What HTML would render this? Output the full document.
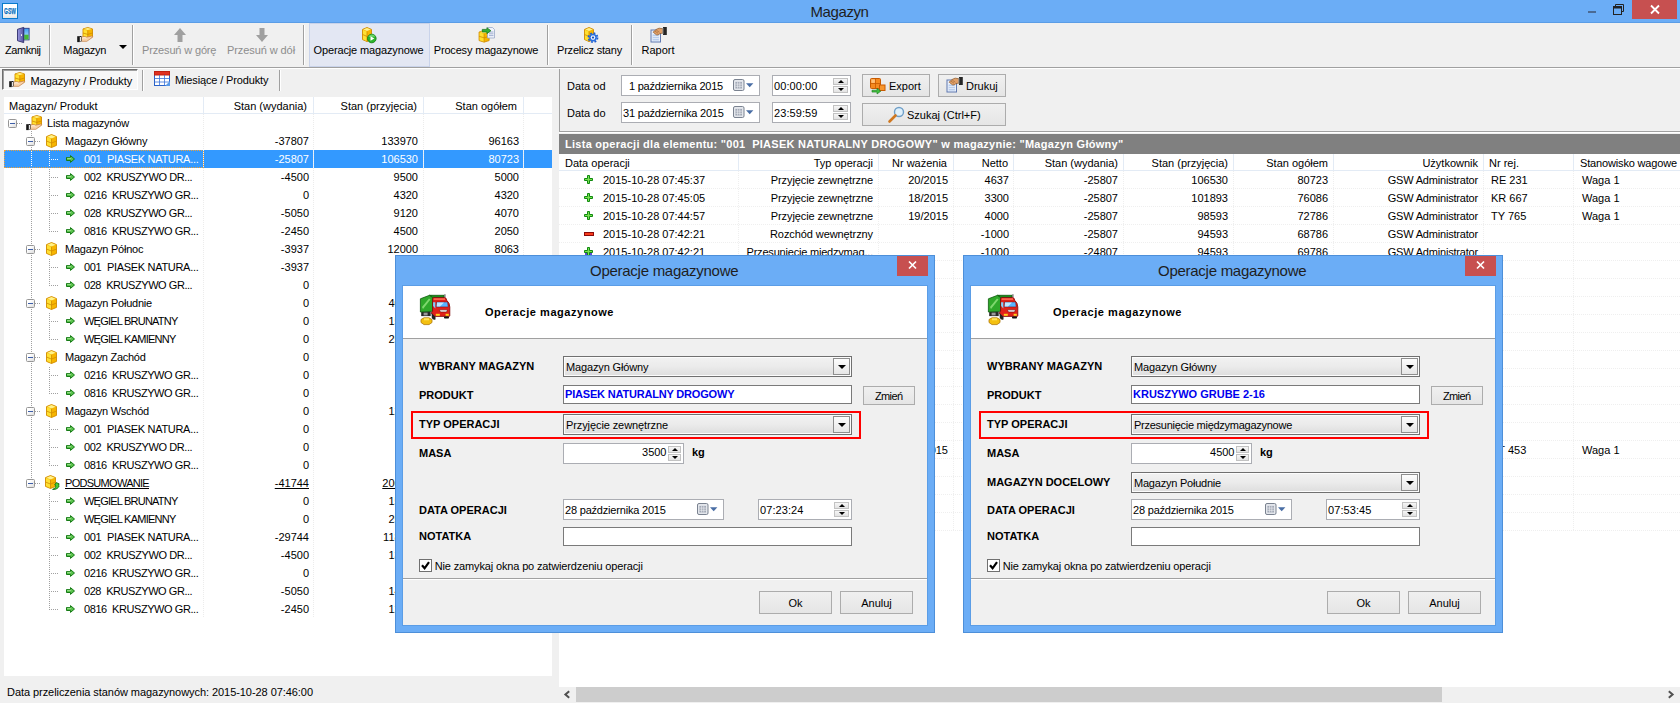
<!DOCTYPE html><html lang="pl"><head><meta charset="utf-8"><title>Magazyn</title><style>
*{box-sizing:border-box}
html,body{margin:0;padding:0}
body{width:1680px;height:703px;position:relative;overflow:hidden;background:#f0f0f0;font:11px "Liberation Sans",sans-serif;color:#000}
.a{position:absolute;white-space:pre}
.t{position:absolute;white-space:pre;line-height:14px;height:14px}
.r{text-align:right}
.b{font-weight:bold}
.w{color:#fff}
.g{color:#8d8d8d}
.vs{position:absolute;width:2px;border-left:1px solid #a0a0a0;border-right:1px solid #fff}
.btn{position:absolute;border:1px solid #acacac;background:linear-gradient(#f0f0f0,#e5e5e5);}
.inp{position:absolute;border:1px solid #abadb3;background:#fff}
.cmb{position:absolute;border:1px solid #707070;box-shadow:inset 0 0 0 1px #fcfcfc;background:linear-gradient(#f2f2f2,#ebebeb 50%,#dddddd);}
.dlg{position:absolute;background:#6badf6;border:1px solid #4d8fd9;box-shadow:0 0 0 0 #000}
svg{position:absolute;overflow:visible}
</style></head><body>
<div class="a" style="left:0px;top:0px;width:1680px;height:23px;background:#6badf6;border-bottom:1px solid #5b9de6"></div>
<div class="a" style="left:2px;top:3px;width:16px;height:16px;background:linear-gradient(#fff 55%,#e4e4e4);border:1px solid #0a7acc"></div>
<svg style="left:2px;top:3px" width="16" height="16" viewBox="0 0 16 16"><text x="2.100" y="11.100" font-family="Liberation Sans, sans-serif" font-size="8.500" font-weight="bold" fill="#0a6fc0" stroke="#0a6fc0" stroke-width=".25" textLength="11.800" lengthAdjust="spacingAndGlyphs">GSW</text></svg>
<div class="t " style="left:689.5px;width:300px;text-align:center;top:5px;letter-spacing:-0.411px;font-size:15px;line-height:18px;height:18px;top:3px;color:#1e1e1e">Magazyn</div>
<div class="a" style="left:1588px;top:11px;width:8px;height:2px;background:#4a6a94"></div>
<svg style="left:1613px;top:4px" width="11" height="11" viewBox="0 0 11 11"><path d="M2.5 2.5V.5h8v7h-2" fill="none" stroke="#222" stroke-width="1"/><rect x=".5" y="2.5" width="8" height="8" fill="none" stroke="#222"/><rect x="1" y="3" width="7" height="1.5" fill="#222"/></svg>
<div class="a" style="left:1632px;top:0px;width:45px;height:19px;background:#c75050"></div>
<svg style="left:1650px;top:5px" width="10" height="9" viewBox="0 0 10 9"><path d="M1 .5l8 8M9 .5l-8 8" stroke="#fff" stroke-width="1.8"/></svg>
<div class="a" style="left:0px;top:67px;width:1680px;height:1px;background:#a0a0a0"></div>
<div class="a" style="left:0px;top:68px;width:1680px;height:1px;background:#fff"></div>
<div class="a" style="left:49px;top:25px;width:2px;height:40px;border-left:1px solid #a0a0a0;border-right:1px solid #fff"></div>
<div class="a" style="left:132px;top:25px;width:2px;height:40px;border-left:1px solid #a0a0a0;border-right:1px solid #fff"></div>
<div class="a" style="left:303px;top:25px;width:2px;height:40px;border-left:1px solid #a0a0a0;border-right:1px solid #fff"></div>
<div class="a" style="left:547px;top:25px;width:2px;height:40px;border-left:1px solid #a0a0a0;border-right:1px solid #fff"></div>
<div class="a" style="left:631px;top:25px;width:2px;height:40px;border-left:1px solid #a0a0a0;border-right:1px solid #fff"></div>
<div class="a" style="left:309px;top:23px;width:121px;height:44px;background:#e3e7f3;border:1px solid #c9d3ea"></div>
<div class="t " style="left:-127.25px;width:300px;text-align:center;top:43px;letter-spacing:-0.431px;">Zamknij</div>
<div class="t " style="left:-65.25px;width:300px;text-align:center;top:43px;letter-spacing:-0.234px;">Magazyn</div>
<svg style="left:119px;top:45px" width="8" height="4" viewBox="0 0 8 4"><path d="M0 0h8L4 4z" fill="#000"/></svg>
<div class="t g" style="left:29.19999999999999px;width:300px;text-align:center;top:43px;letter-spacing:-0.153px;">Przesuń w górę</div>
<div class="t g" style="left:111px;width:300px;text-align:center;top:43px;letter-spacing:-0.084px;">Przesuń w dół</div>
<div class="t " style="left:218.5px;width:300px;text-align:center;top:43px;letter-spacing:-0.132px;">Operacje magazynowe</div>
<div class="t " style="left:336px;width:300px;text-align:center;top:43px;letter-spacing:-0.173px;">Procesy magazynowe</div>
<div class="t " style="left:439.5px;width:300px;text-align:center;top:43px;letter-spacing:-0.204px;">Przelicz stany</div>
<div class="t " style="left:508px;width:300px;text-align:center;top:43px;">Raport</div>
<svg style="left:17px;top:27px" width="13" height="16" viewBox="0 0 13 16"><defs><linearGradient id="sky" x1="0" y1="0" x2="0" y2="1"><stop offset="0" stop-color="#3a9af0"/><stop offset="1" stop-color="#d0ecff"/></linearGradient><linearGradient id="dr" x1="0" y1="0" x2="1" y2="0"><stop offset="0" stop-color="#9a98e0"/><stop offset="1" stop-color="#55529f"/></linearGradient></defs><rect x="6.700" y="1.300" width="5.400" height="11.600" fill="url(#sky)" stroke="#2a3a8a" stroke-width=".9"/><rect x="7.200" y="7.700" width="4.400" height="4.800" fill="#46b836"/><path d="M.5 2.300L6.700 .4v15.200L.5 13.700z" fill="url(#dr)" stroke="#2e2c6a" stroke-width=".9" stroke-linejoin="round"/><rect x="4" y="7.300" width="1" height="1.600" fill="#fff"/></svg>
<svg style="left:77px;top:27px" width="17" height="16" viewBox="0 0 17 16"><path d="M6.0 1.92L10.75 0.5l4.75 1.42v8.16l-4.75 1.42-4.75-1.42z" fill="#f7b500" stroke="#d08c00" stroke-width=".9"/><path d="M6.5 2.42l4.25 1.22v7.5600000000000005L6.5 9.68z" fill="#ffe032"/><path d="M6.8 1.92L10.75 1l3.95 0.9199999999999999-3.95 1.02z" fill="#fff28a"/><path d="M6.0 6.0l4.75 1.42 4.75-1.42M10.75 3.44v8.16" fill="none" stroke="#d08c00" stroke-width=".8"/><path d="M4.500 10.200c1.900-.9 3.400-.9 5.200-.1l5-1c1.100-.1 1.300.8.400 1.500l-5.300 3.700H4.500z" fill="#f8d2aa" stroke="#c07a3c" stroke-width=".7"/><path d="M5.200 11.200c1.600-.6 2.800-.5 4.200.1" stroke="#fff" stroke-width=".7" fill="none"/><rect x=".2" y="9.200" width="2.600" height="5.900" fill="#161616"/><rect x="2.800" y="9.700" width="1.600" height="4.900" fill="#f0f0f0" stroke="#161616" stroke-width=".5"/></svg>
<svg style="left:174px;top:28px" width="12" height="14" viewBox="0 0 12 14"><path d="M6 0l6 7H8.5v7h-5V7H0z" fill="#a0a0a0"/></svg>
<svg style="left:256px;top:28px" width="12" height="14" viewBox="0 0 12 14"><path d="M6 14l6-7H8.5V0h-5v7H0z" fill="#a0a0a0"/></svg>
<svg style="left:362px;top:27px" width="15" height="16" viewBox="0 0 15 16"><path d="M0.5 2.4L5.0 0.5l4.5 1.9v10.2l-4.5 1.9-4.5-1.9z" fill="#f7b500" stroke="#d08c00" stroke-width=".9"/><path d="M1 2.9l4.0 1.7v9.6L1 12.2z" fill="#ffe032"/><path d="M1.3 2.4L5.0 1l3.7 1.4-3.7 1.5z" fill="#fff28a"/><path d="M0.5 7.5l4.5 1.9 4.5-1.9M5.0 4.3999999999999995v10.2" fill="none" stroke="#d08c00" stroke-width=".8"/><circle cx="9.800" cy="11.500" r="4.300" fill="#2db52d" stroke="#148214" stroke-width=".9"/><path d="M6.300 10a3.700 3.700 0 0 1 7-.2z" fill="#7fe07f" opacity=".7"/><path d="M8.500 9.200l3.900 2.300-3.900 2.300z" fill="#fff"/></svg>
<svg style="left:478px;top:27px" width="17" height="16" viewBox="0 0 17 16"><path d="M1.1 5.016L6.1 3.5l5.0 1.516v8.568l-5.0 1.516-5.0-1.516z" fill="#f7b500" stroke="#d08c00" stroke-width=".9"/><path d="M1.6 5.516l4.5 1.316v7.968L1.6 13.184z" fill="#ffe032"/><path d="M1.9 5.016L6.1 4l4.2 1.016-4.2 1.116z" fill="#fff28a"/><path d="M1.1 9.3l5.0 1.516 5.0-1.516M6.1 6.632v8.568" fill="none" stroke="#d08c00" stroke-width=".8"/><path d="M9.500 .5h5l2 2v8.500h-7z" fill="#f1f4fb" stroke="#9aa8c8" stroke-width=".8"/><path d="M11 5h4.500M11 6.800h4.500M11 8.600h4.500" stroke="#8ea0c8" stroke-width=".8"/><path d="M4.300 2.400h4.600V.7l4 3-4 3V5H4.300z" fill="#35b035" stroke="#137013" stroke-width=".7" stroke-linejoin="round"/></svg>
<svg style="left:584px;top:27px" width="15" height="16" viewBox="0 0 15 16"><path d="M0.5 2.4L5.0 0.5l4.5 1.9v10.2l-4.5 1.9-4.5-1.9z" fill="#f7b500" stroke="#d08c00" stroke-width=".9"/><path d="M1 2.9l4.0 1.7v9.6L1 12.2z" fill="#ffe032"/><path d="M1.3 2.4L5.0 1l3.7 1.4-3.7 1.5z" fill="#fff28a"/><path d="M0.5 7.5l4.5 1.9 4.5-1.9M5.0 4.3999999999999995v10.2" fill="none" stroke="#d08c00" stroke-width=".8"/><circle cx="9" cy="10.600" r="4.500" fill="none" stroke="#1f5fd0" stroke-width="1.800" stroke-dasharray="1.770 1.770"/><circle cx="9" cy="10.600" r="3.900" fill="#2a6fe0"/><circle cx="9" cy="10.600" r="2.300" fill="#eaf2ff"/><circle cx="9" cy="10.600" r="1.100" fill="#1f4fb0"/></svg>
<svg style="left:650px;top:27px" width="17" height="16" viewBox="0 0 17 16"><rect x="1" y="3" width="9.500" height="12" fill="#eaf0fb" stroke="#5f78b0"/><rect x="2.600" y="7.500" width="6.300" height="6" fill="#b8cdee"/><path d="M2.600 9.500h6.300M2.600 11.500h6.300" stroke="#eef3fb" stroke-width=".7"/><path d="M3.200 5.200c1.500-2 4-3.600 6-4l4 .6v4.200l-3.200.6c-1.500 1.200-2.600 1.600-3.600 1.200z" fill="#e0a06a" stroke="#8a5424" stroke-width=".7"/><path d="M5 4.200l3 2M6.300 3.200l3 2" stroke="#8a5424" stroke-width=".5"/><rect x="13" y="0" width="3.800" height="8" fill="#262626"/><rect x="12.400" y="1" width="1" height="6" fill="#9a9a9a"/></svg>
<div class="a" style="left:2px;top:69px;width:136px;height:21px;border:1px solid #6e6e6e;border-right-color:#fff;border-bottom-color:#fff;background:#f7f7f7;box-shadow:inset 1px 1px 0 #a0a0a0"></div>
<svg style="left:9px;top:72px" width="17" height="16" viewBox="0 0 17 16"><path d="M6.0 1.92L10.75 0.5l4.75 1.42v8.16l-4.75 1.42-4.75-1.42z" fill="#f7b500" stroke="#d08c00" stroke-width=".9"/><path d="M6.5 2.42l4.25 1.22v7.5600000000000005L6.5 9.68z" fill="#ffe032"/><path d="M6.8 1.92L10.75 1l3.95 0.9199999999999999-3.95 1.02z" fill="#fff28a"/><path d="M6.0 6.0l4.75 1.42 4.75-1.42M10.75 3.44v8.16" fill="none" stroke="#d08c00" stroke-width=".8"/><path d="M4.500 10.200c1.900-.9 3.400-.9 5.200-.1l5-1c1.100-.1 1.300.8.400 1.500l-5.300 3.700H4.500z" fill="#f8d2aa" stroke="#c07a3c" stroke-width=".7"/><path d="M5.200 11.200c1.600-.6 2.800-.5 4.200.1" stroke="#fff" stroke-width=".7" fill="none"/><rect x=".2" y="9.200" width="2.600" height="5.900" fill="#161616"/><rect x="2.800" y="9.700" width="1.600" height="4.900" fill="#f0f0f0" stroke="#161616" stroke-width=".5"/></svg>
<div class="t " style="left:30.5px;top:74px;letter-spacing:-0.054px;">Magazyny / Produkty</div>
<div class="a" style="left:142px;top:70px;width:2px;height:21px;border-left:1px solid #a0a0a0;border-right:1px solid #fff"></div>
<svg style="left:154px;top:71px" width="16" height="15" viewBox="0 0 16 15"><rect x=".5" y=".5" width="15" height="14" fill="#fff" stroke="#2a62c8"/><rect x=".5" y=".5" width="15" height="3.5" fill="#e03020" stroke="#c02010"/><path d="M.5 7.500h15M.5 11h15M5.500 4v10.500M10.500 4v10.500" stroke="#3a72d8" stroke-width=".8"/><path d="M11 15l5-5v5z" fill="#5a9ae8"/></svg>
<div class="t " style="left:175px;top:73px;letter-spacing:-0.141px;">Miesiące / Produkty</div>
<div class="a" style="left:279px;top:70px;width:2px;height:21px;border-left:1px solid #a0a0a0;border-right:1px solid #fff"></div>
<div class="a" style="left:4px;top:97px;width:548px;height:579px;background:#fff"></div>
<div class="a" style="left:4px;top:113px;width:548px;height:1px;background:#e3ebf5"></div>
<div class="a" style="left:203px;top:97px;width:1px;height:16px;background:#e3ebf5"></div>
<div class="a" style="left:313px;top:97px;width:1px;height:16px;background:#e3ebf5"></div>
<div class="a" style="left:423px;top:97px;width:1px;height:16px;background:#e3ebf5"></div>
<div class="a" style="left:523px;top:97px;width:1px;height:16px;background:#e3ebf5"></div>
<div class="t " style="left:9px;top:99px;">Magazyn/ Produkt</div>
<div class="t r " style="left:7px;width:300px;top:99px;">Stan (wydania)</div>
<div class="t r " style="left:117px;width:300px;top:99px;">Stan (przyjęcia)</div>
<div class="t r " style="left:217px;width:300px;top:99px;">Stan ogółem</div>
<div class="a" style="left:4px;top:150px;width:548px;height:18px;background:#3399ff"></div>
<div class="a" style="left:203px;top:150px;width:1px;height:18px;background:#e8f2ff"></div>
<div class="a" style="left:313px;top:150px;width:1px;height:18px;background:#e8f2ff"></div>
<div class="a" style="left:423px;top:150px;width:1px;height:18px;background:#e8f2ff"></div>
<div class="a" style="left:523px;top:150px;width:1px;height:18px;background:#e8f2ff"></div>
<div class="a" style="left:4px;top:150px;width:200px;height:18px;border:1px dotted #e8a040"></div>
<div class="a" style="left:31px;top:131px;width:1px;height:348px;background:repeating-linear-gradient(180deg,#a0a0a0 0 1px,transparent 1px 2px)"></div>
<div class="a" style="left:203px;top:114px;width:1px;height:504px;background:repeating-linear-gradient(180deg,#ececec 0 1px,transparent 1px 2px)"></div>
<div class="a" style="left:313px;top:114px;width:1px;height:504px;background:repeating-linear-gradient(180deg,#ececec 0 1px,transparent 1px 2px)"></div>
<div class="a" style="left:423px;top:114px;width:1px;height:504px;background:repeating-linear-gradient(180deg,#ececec 0 1px,transparent 1px 2px)"></div>
<div class="a" style="left:523px;top:114px;width:1px;height:504px;background:repeating-linear-gradient(180deg,#ececec 0 1px,transparent 1px 2px)"></div>
<div class="a" style="left:49px;top:151px;width:1px;height:81px;background:repeating-linear-gradient(180deg,#a0a0a0 0 1px,transparent 1px 2px)"></div>
<div class="a" style="left:51px;top:159px;width:7px;height:1px;background:repeating-linear-gradient(90deg,#a0a0a0 0 1px,transparent 1px 2px)"></div>
<div class="a" style="left:51px;top:177px;width:7px;height:1px;background:repeating-linear-gradient(90deg,#a0a0a0 0 1px,transparent 1px 2px)"></div>
<div class="a" style="left:51px;top:195px;width:7px;height:1px;background:repeating-linear-gradient(90deg,#a0a0a0 0 1px,transparent 1px 2px)"></div>
<div class="a" style="left:51px;top:213px;width:7px;height:1px;background:repeating-linear-gradient(90deg,#a0a0a0 0 1px,transparent 1px 2px)"></div>
<div class="a" style="left:51px;top:231px;width:7px;height:1px;background:repeating-linear-gradient(90deg,#a0a0a0 0 1px,transparent 1px 2px)"></div>
<div class="a" style="left:49px;top:259px;width:1px;height:27px;background:repeating-linear-gradient(180deg,#a0a0a0 0 1px,transparent 1px 2px)"></div>
<div class="a" style="left:51px;top:267px;width:7px;height:1px;background:repeating-linear-gradient(90deg,#a0a0a0 0 1px,transparent 1px 2px)"></div>
<div class="a" style="left:51px;top:285px;width:7px;height:1px;background:repeating-linear-gradient(90deg,#a0a0a0 0 1px,transparent 1px 2px)"></div>
<div class="a" style="left:49px;top:313px;width:1px;height:27px;background:repeating-linear-gradient(180deg,#a0a0a0 0 1px,transparent 1px 2px)"></div>
<div class="a" style="left:51px;top:321px;width:7px;height:1px;background:repeating-linear-gradient(90deg,#a0a0a0 0 1px,transparent 1px 2px)"></div>
<div class="a" style="left:51px;top:339px;width:7px;height:1px;background:repeating-linear-gradient(90deg,#a0a0a0 0 1px,transparent 1px 2px)"></div>
<div class="a" style="left:49px;top:367px;width:1px;height:27px;background:repeating-linear-gradient(180deg,#a0a0a0 0 1px,transparent 1px 2px)"></div>
<div class="a" style="left:51px;top:375px;width:7px;height:1px;background:repeating-linear-gradient(90deg,#a0a0a0 0 1px,transparent 1px 2px)"></div>
<div class="a" style="left:51px;top:393px;width:7px;height:1px;background:repeating-linear-gradient(90deg,#a0a0a0 0 1px,transparent 1px 2px)"></div>
<div class="a" style="left:49px;top:421px;width:1px;height:45px;background:repeating-linear-gradient(180deg,#a0a0a0 0 1px,transparent 1px 2px)"></div>
<div class="a" style="left:51px;top:429px;width:7px;height:1px;background:repeating-linear-gradient(90deg,#a0a0a0 0 1px,transparent 1px 2px)"></div>
<div class="a" style="left:51px;top:447px;width:7px;height:1px;background:repeating-linear-gradient(90deg,#a0a0a0 0 1px,transparent 1px 2px)"></div>
<div class="a" style="left:51px;top:465px;width:7px;height:1px;background:repeating-linear-gradient(90deg,#a0a0a0 0 1px,transparent 1px 2px)"></div>
<div class="a" style="left:49px;top:493px;width:1px;height:117px;background:repeating-linear-gradient(180deg,#a0a0a0 0 1px,transparent 1px 2px)"></div>
<div class="a" style="left:51px;top:501px;width:7px;height:1px;background:repeating-linear-gradient(90deg,#a0a0a0 0 1px,transparent 1px 2px)"></div>
<div class="a" style="left:51px;top:519px;width:7px;height:1px;background:repeating-linear-gradient(90deg,#a0a0a0 0 1px,transparent 1px 2px)"></div>
<div class="a" style="left:51px;top:537px;width:7px;height:1px;background:repeating-linear-gradient(90deg,#a0a0a0 0 1px,transparent 1px 2px)"></div>
<div class="a" style="left:51px;top:555px;width:7px;height:1px;background:repeating-linear-gradient(90deg,#a0a0a0 0 1px,transparent 1px 2px)"></div>
<div class="a" style="left:51px;top:573px;width:7px;height:1px;background:repeating-linear-gradient(90deg,#a0a0a0 0 1px,transparent 1px 2px)"></div>
<div class="a" style="left:51px;top:591px;width:7px;height:1px;background:repeating-linear-gradient(90deg,#a0a0a0 0 1px,transparent 1px 2px)"></div>
<div class="a" style="left:51px;top:609px;width:7px;height:1px;background:repeating-linear-gradient(90deg,#a0a0a0 0 1px,transparent 1px 2px)"></div>
<div class="a" style="left:31px;top:151px;width:1px;height:16px;background:repeating-linear-gradient(180deg,#fff 0 1px,transparent 1px 2px)"></div>
<div class="a" style="left:49px;top:151px;width:1px;height:16px;background:repeating-linear-gradient(180deg,#fff 0 1px,transparent 1px 2px)"></div>
<div class="a" style="left:51px;top:159px;width:7px;height:1px;background:repeating-linear-gradient(90deg,#fff 0 1px,transparent 1px 2px)"></div>
<div class="a" style="left:8px;top:119px;width:9px;height:9px;border:1px solid #969696;border-radius:1.5px;background:linear-gradient(135deg,#fff 30%,#dcdcdc)"></div><div class="a" style="left:10px;top:123px;width:5px;height:1px;background:#3d5ea8"></div>
<div class="a" style="left:17px;top:123px;width:5px;height:1px;background:repeating-linear-gradient(90deg,#a0a0a0 0 1px,transparent 1px 2px)"></div>
<svg style="left:26px;top:115px" width="17" height="16" viewBox="0 0 17 16"><path d="M6.0 1.92L10.75 0.5l4.75 1.42v8.16l-4.75 1.42-4.75-1.42z" fill="#f7b500" stroke="#d08c00" stroke-width=".9"/><path d="M6.5 2.42l4.25 1.22v7.5600000000000005L6.5 9.68z" fill="#ffe032"/><path d="M6.8 1.92L10.75 1l3.95 0.9199999999999999-3.95 1.02z" fill="#fff28a"/><path d="M6.0 6.0l4.75 1.42 4.75-1.42M10.75 3.44v8.16" fill="none" stroke="#d08c00" stroke-width=".8"/><path d="M4.500 10.200c1.900-.9 3.400-.9 5.200-.1l5-1c1.100-.1 1.300.8.400 1.500l-5.300 3.700H4.500z" fill="#f8d2aa" stroke="#c07a3c" stroke-width=".7"/><path d="M5.200 11.200c1.600-.6 2.800-.5 4.200.1" stroke="#fff" stroke-width=".7" fill="none"/><rect x=".2" y="9.200" width="2.600" height="5.900" fill="#161616"/><rect x="2.800" y="9.700" width="1.600" height="4.900" fill="#f0f0f0" stroke="#161616" stroke-width=".5"/></svg>
<div class="t " style="left:47px;top:116px;letter-spacing:-0.200px;">Lista magazynów</div>
<div class="a" style="left:26px;top:137px;width:9px;height:9px;border:1px solid #969696;border-radius:1.5px;background:linear-gradient(135deg,#fff 30%,#dcdcdc)"></div><div class="a" style="left:28px;top:141px;width:5px;height:1px;background:#3d5ea8"></div>
<div class="a" style="left:35px;top:141px;width:5px;height:1px;background:repeating-linear-gradient(90deg,#a0a0a0 0 1px,transparent 1px 2px)"></div>
<svg style="left:46px;top:134px" width="11" height="14" viewBox="0 0 11 14"><path d="M.5 2.600L5.500 .5l5 2.100v8.800l-5 2.100-5-2.100z" fill="#f7b500" stroke="#d08c00" stroke-width=".9"/><path d="M1 3.100l4.500 1.900v8L1 11.100z" fill="#ffe032"/><path d="M1.300 2.700L5.500 1l4.200 1.700-4.200 1.800z" fill="#fff28a"/><path d="M.5 7l5 2.100 5-2.100M5.500 4.700v8.800" fill="none" stroke="#d08c00" stroke-width=".8"/></svg>
<div class="t " style="left:65px;top:134px;letter-spacing:-0.141px;">Magazyn Główny</div>
<div class="t r " style="left:9px;width:300px;top:134px;">-37807</div>
<div class="t r " style="left:118px;width:300px;top:134px;">133970</div>
<div class="t r " style="left:219px;width:300px;top:134px;">96163</div>
<svg style="left:66px;top:155px" width="9" height="8" viewBox="0 0 9 8"><path d="M.5 2.500h4V.6L8.500 4l-4 3.400V5.500h-4z" fill="#58c24a" stroke="#167a16" stroke-width="1" stroke-linejoin="round"/><path d="M1.200 3.300h4" stroke="#b6eaa8" stroke-width=".8"/></svg>
<div class="t w" style="left:84px;top:152px;letter-spacing:-0.307px;">001  PIASEK NATURA...</div>
<div class="t r w" style="left:9px;width:300px;top:152px;">-25807</div>
<div class="t r w" style="left:118px;width:300px;top:152px;">106530</div>
<div class="t r w" style="left:219px;width:300px;top:152px;">80723</div>
<svg style="left:66px;top:173px" width="9" height="8" viewBox="0 0 9 8"><path d="M.5 2.500h4V.6L8.500 4l-4 3.400V5.500h-4z" fill="#58c24a" stroke="#167a16" stroke-width="1" stroke-linejoin="round"/><path d="M1.200 3.300h4" stroke="#b6eaa8" stroke-width=".8"/></svg>
<div class="t " style="left:84px;top:170px;letter-spacing:-0.418px;">002  KRUSZYWO DR...</div>
<div class="t r " style="left:9px;width:300px;top:170px;">-4500</div>
<div class="t r " style="left:118px;width:300px;top:170px;">9500</div>
<div class="t r " style="left:219px;width:300px;top:170px;">5000</div>
<svg style="left:66px;top:191px" width="9" height="8" viewBox="0 0 9 8"><path d="M.5 2.500h4V.6L8.500 4l-4 3.400V5.500h-4z" fill="#58c24a" stroke="#167a16" stroke-width="1" stroke-linejoin="round"/><path d="M1.200 3.300h4" stroke="#b6eaa8" stroke-width=".8"/></svg>
<div class="t " style="left:84px;top:188px;letter-spacing:-0.424px;">0216  KRUSZYWO GR...</div>
<div class="t r " style="left:9px;width:300px;top:188px;">0</div>
<div class="t r " style="left:118px;width:300px;top:188px;">4320</div>
<div class="t r " style="left:219px;width:300px;top:188px;">4320</div>
<svg style="left:66px;top:209px" width="9" height="8" viewBox="0 0 9 8"><path d="M.5 2.500h4V.6L8.500 4l-4 3.400V5.500h-4z" fill="#58c24a" stroke="#167a16" stroke-width="1" stroke-linejoin="round"/><path d="M1.200 3.300h4" stroke="#b6eaa8" stroke-width=".8"/></svg>
<div class="t " style="left:84px;top:206px;letter-spacing:-0.450px;">028  KRUSZYWO GR...</div>
<div class="t r " style="left:9px;width:300px;top:206px;">-5050</div>
<div class="t r " style="left:118px;width:300px;top:206px;">9120</div>
<div class="t r " style="left:219px;width:300px;top:206px;">4070</div>
<svg style="left:66px;top:227px" width="9" height="8" viewBox="0 0 9 8"><path d="M.5 2.500h4V.6L8.500 4l-4 3.400V5.500h-4z" fill="#58c24a" stroke="#167a16" stroke-width="1" stroke-linejoin="round"/><path d="M1.200 3.300h4" stroke="#b6eaa8" stroke-width=".8"/></svg>
<div class="t " style="left:84px;top:224px;letter-spacing:-0.424px;">0816  KRUSZYWO GR...</div>
<div class="t r " style="left:9px;width:300px;top:224px;">-2450</div>
<div class="t r " style="left:118px;width:300px;top:224px;">4500</div>
<div class="t r " style="left:219px;width:300px;top:224px;">2050</div>
<div class="a" style="left:26px;top:245px;width:9px;height:9px;border:1px solid #969696;border-radius:1.5px;background:linear-gradient(135deg,#fff 30%,#dcdcdc)"></div><div class="a" style="left:28px;top:249px;width:5px;height:1px;background:#3d5ea8"></div>
<div class="a" style="left:35px;top:249px;width:5px;height:1px;background:repeating-linear-gradient(90deg,#a0a0a0 0 1px,transparent 1px 2px)"></div>
<svg style="left:46px;top:242px" width="11" height="14" viewBox="0 0 11 14"><path d="M.5 2.600L5.500 .5l5 2.100v8.800l-5 2.100-5-2.100z" fill="#f7b500" stroke="#d08c00" stroke-width=".9"/><path d="M1 3.100l4.500 1.900v8L1 11.100z" fill="#ffe032"/><path d="M1.300 2.700L5.500 1l4.200 1.700-4.200 1.800z" fill="#fff28a"/><path d="M.5 7l5 2.100 5-2.100M5.500 4.700v8.800" fill="none" stroke="#d08c00" stroke-width=".8"/></svg>
<div class="t " style="left:65px;top:242px;letter-spacing:-0.216px;">Magazyn Północ</div>
<div class="t r " style="left:9px;width:300px;top:242px;">-3937</div>
<div class="t r " style="left:118px;width:300px;top:242px;">12000</div>
<div class="t r " style="left:219px;width:300px;top:242px;">8063</div>
<svg style="left:66px;top:263px" width="9" height="8" viewBox="0 0 9 8"><path d="M.5 2.500h4V.6L8.500 4l-4 3.400V5.500h-4z" fill="#58c24a" stroke="#167a16" stroke-width="1" stroke-linejoin="round"/><path d="M1.200 3.300h4" stroke="#b6eaa8" stroke-width=".8"/></svg>
<div class="t " style="left:84px;top:260px;letter-spacing:-0.307px;">001  PIASEK NATURA...</div>
<div class="t r " style="left:9px;width:300px;top:260px;">-3937</div>
<div class="t r " style="left:119px;width:300px;top:260px;"></div>
<div class="t r " style="left:219px;width:300px;top:260px;">3063</div>
<svg style="left:66px;top:281px" width="9" height="8" viewBox="0 0 9 8"><path d="M.5 2.500h4V.6L8.500 4l-4 3.400V5.500h-4z" fill="#58c24a" stroke="#167a16" stroke-width="1" stroke-linejoin="round"/><path d="M1.200 3.300h4" stroke="#b6eaa8" stroke-width=".8"/></svg>
<div class="t " style="left:84px;top:278px;letter-spacing:-0.450px;">028  KRUSZYWO GR...</div>
<div class="t r " style="left:9px;width:300px;top:278px;">0</div>
<div class="t r " style="left:119px;width:300px;top:278px;"></div>
<div class="t r " style="left:219px;width:300px;top:278px;">5000</div>
<div class="a" style="left:26px;top:299px;width:9px;height:9px;border:1px solid #969696;border-radius:1.5px;background:linear-gradient(135deg,#fff 30%,#dcdcdc)"></div><div class="a" style="left:28px;top:303px;width:5px;height:1px;background:#3d5ea8"></div>
<div class="a" style="left:35px;top:303px;width:5px;height:1px;background:repeating-linear-gradient(90deg,#a0a0a0 0 1px,transparent 1px 2px)"></div>
<svg style="left:46px;top:296px" width="11" height="14" viewBox="0 0 11 14"><path d="M.5 2.600L5.500 .5l5 2.100v8.800l-5 2.100-5-2.100z" fill="#f7b500" stroke="#d08c00" stroke-width=".9"/><path d="M1 3.100l4.500 1.900v8L1 11.100z" fill="#ffe032"/><path d="M1.300 2.700L5.500 1l4.200 1.700-4.200 1.800z" fill="#fff28a"/><path d="M.5 7l5 2.100 5-2.100M5.500 4.700v8.800" fill="none" stroke="#d08c00" stroke-width=".8"/></svg>
<div class="t " style="left:65px;top:296px;letter-spacing:-0.220px;">Magazyn Południe</div>
<div class="t r " style="left:9px;width:300px;top:296px;">0</div>
<div class="t r " style="left:119px;width:300px;top:296px;">40000</div>
<div class="t r " style="left:219px;width:300px;top:296px;">40000</div>
<svg style="left:66px;top:317px" width="9" height="8" viewBox="0 0 9 8"><path d="M.5 2.500h4V.6L8.500 4l-4 3.400V5.500h-4z" fill="#58c24a" stroke="#167a16" stroke-width="1" stroke-linejoin="round"/><path d="M1.200 3.300h4" stroke="#b6eaa8" stroke-width=".8"/></svg>
<div class="t " style="left:84px;top:314px;letter-spacing:-0.775px;">WĘGIEL BRUNATNY</div>
<div class="t r " style="left:9px;width:300px;top:314px;">0</div>
<div class="t r " style="left:119px;width:300px;top:314px;">15000</div>
<div class="t r " style="left:219px;width:300px;top:314px;">15000</div>
<svg style="left:66px;top:335px" width="9" height="8" viewBox="0 0 9 8"><path d="M.5 2.500h4V.6L8.500 4l-4 3.400V5.500h-4z" fill="#58c24a" stroke="#167a16" stroke-width="1" stroke-linejoin="round"/><path d="M1.200 3.300h4" stroke="#b6eaa8" stroke-width=".8"/></svg>
<div class="t " style="left:84px;top:332px;letter-spacing:-0.759px;">WĘGIEL KAMIENNY</div>
<div class="t r " style="left:9px;width:300px;top:332px;">0</div>
<div class="t r " style="left:119px;width:300px;top:332px;">25000</div>
<div class="t r " style="left:219px;width:300px;top:332px;">25000</div>
<div class="a" style="left:26px;top:353px;width:9px;height:9px;border:1px solid #969696;border-radius:1.5px;background:linear-gradient(135deg,#fff 30%,#dcdcdc)"></div><div class="a" style="left:28px;top:357px;width:5px;height:1px;background:#3d5ea8"></div>
<div class="a" style="left:35px;top:357px;width:5px;height:1px;background:repeating-linear-gradient(90deg,#a0a0a0 0 1px,transparent 1px 2px)"></div>
<svg style="left:46px;top:350px" width="11" height="14" viewBox="0 0 11 14"><path d="M.5 2.600L5.500 .5l5 2.100v8.800l-5 2.100-5-2.100z" fill="#f7b500" stroke="#d08c00" stroke-width=".9"/><path d="M1 3.100l4.500 1.900v8L1 11.100z" fill="#ffe032"/><path d="M1.300 2.700L5.500 1l4.200 1.700-4.200 1.800z" fill="#fff28a"/><path d="M.5 7l5 2.100 5-2.100M5.500 4.700v8.800" fill="none" stroke="#d08c00" stroke-width=".8"/></svg>
<div class="t " style="left:65px;top:350px;letter-spacing:-0.278px;">Magazyn Zachód</div>
<div class="t r " style="left:9px;width:300px;top:350px;">0</div>
<div class="t r " style="left:119px;width:300px;top:350px;"></div>
<div class="t r " style="left:219px;width:300px;top:350px;">9000</div>
<svg style="left:66px;top:371px" width="9" height="8" viewBox="0 0 9 8"><path d="M.5 2.500h4V.6L8.500 4l-4 3.400V5.500h-4z" fill="#58c24a" stroke="#167a16" stroke-width="1" stroke-linejoin="round"/><path d="M1.200 3.300h4" stroke="#b6eaa8" stroke-width=".8"/></svg>
<div class="t " style="left:84px;top:368px;letter-spacing:-0.424px;">0216  KRUSZYWO GR...</div>
<div class="t r " style="left:9px;width:300px;top:368px;">0</div>
<div class="t r " style="left:119px;width:300px;top:368px;"></div>
<div class="t r " style="left:219px;width:300px;top:368px;">4500</div>
<svg style="left:66px;top:389px" width="9" height="8" viewBox="0 0 9 8"><path d="M.5 2.500h4V.6L8.500 4l-4 3.400V5.500h-4z" fill="#58c24a" stroke="#167a16" stroke-width="1" stroke-linejoin="round"/><path d="M1.200 3.300h4" stroke="#b6eaa8" stroke-width=".8"/></svg>
<div class="t " style="left:84px;top:386px;letter-spacing:-0.424px;">0816  KRUSZYWO GR...</div>
<div class="t r " style="left:9px;width:300px;top:386px;">0</div>
<div class="t r " style="left:119px;width:300px;top:386px;"></div>
<div class="t r " style="left:219px;width:300px;top:386px;">4500</div>
<div class="a" style="left:26px;top:407px;width:9px;height:9px;border:1px solid #969696;border-radius:1.5px;background:linear-gradient(135deg,#fff 30%,#dcdcdc)"></div><div class="a" style="left:28px;top:411px;width:5px;height:1px;background:#3d5ea8"></div>
<div class="a" style="left:35px;top:411px;width:5px;height:1px;background:repeating-linear-gradient(90deg,#a0a0a0 0 1px,transparent 1px 2px)"></div>
<svg style="left:46px;top:404px" width="11" height="14" viewBox="0 0 11 14"><path d="M.5 2.600L5.500 .5l5 2.100v8.800l-5 2.100-5-2.100z" fill="#f7b500" stroke="#d08c00" stroke-width=".9"/><path d="M1 3.100l4.500 1.900v8L1 11.100z" fill="#ffe032"/><path d="M1.300 2.700L5.500 1l4.200 1.700-4.200 1.800z" fill="#fff28a"/><path d="M.5 7l5 2.100 5-2.100M5.500 4.700v8.800" fill="none" stroke="#d08c00" stroke-width=".8"/></svg>
<div class="t " style="left:65px;top:404px;letter-spacing:-0.246px;">Magazyn Wschód</div>
<div class="t r " style="left:9px;width:300px;top:404px;">0</div>
<div class="t r " style="left:119px;width:300px;top:404px;">12000</div>
<div class="t r " style="left:219px;width:300px;top:404px;">12000</div>
<svg style="left:66px;top:425px" width="9" height="8" viewBox="0 0 9 8"><path d="M.5 2.500h4V.6L8.500 4l-4 3.400V5.500h-4z" fill="#58c24a" stroke="#167a16" stroke-width="1" stroke-linejoin="round"/><path d="M1.200 3.300h4" stroke="#b6eaa8" stroke-width=".8"/></svg>
<div class="t " style="left:84px;top:422px;letter-spacing:-0.307px;">001  PIASEK NATURA...</div>
<div class="t r " style="left:9px;width:300px;top:422px;">0</div>
<div class="t r " style="left:119px;width:300px;top:422px;"></div>
<div class="t r " style="left:219px;width:300px;top:422px;">5000</div>
<svg style="left:66px;top:443px" width="9" height="8" viewBox="0 0 9 8"><path d="M.5 2.500h4V.6L8.500 4l-4 3.400V5.500h-4z" fill="#58c24a" stroke="#167a16" stroke-width="1" stroke-linejoin="round"/><path d="M1.200 3.300h4" stroke="#b6eaa8" stroke-width=".8"/></svg>
<div class="t " style="left:84px;top:440px;letter-spacing:-0.418px;">002  KRUSZYWO DR...</div>
<div class="t r " style="left:9px;width:300px;top:440px;">0</div>
<div class="t r " style="left:119px;width:300px;top:440px;"></div>
<div class="t r " style="left:219px;width:300px;top:440px;">3500</div>
<svg style="left:66px;top:461px" width="9" height="8" viewBox="0 0 9 8"><path d="M.5 2.500h4V.6L8.500 4l-4 3.400V5.500h-4z" fill="#58c24a" stroke="#167a16" stroke-width="1" stroke-linejoin="round"/><path d="M1.200 3.300h4" stroke="#b6eaa8" stroke-width=".8"/></svg>
<div class="t " style="left:84px;top:458px;letter-spacing:-0.424px;">0816  KRUSZYWO GR...</div>
<div class="t r " style="left:9px;width:300px;top:458px;">0</div>
<div class="t r " style="left:119px;width:300px;top:458px;"></div>
<div class="t r " style="left:219px;width:300px;top:458px;">3500</div>
<div class="a" style="left:26px;top:479px;width:9px;height:9px;border:1px solid #969696;border-radius:1.5px;background:linear-gradient(135deg,#fff 30%,#dcdcdc)"></div><div class="a" style="left:28px;top:483px;width:5px;height:1px;background:#3d5ea8"></div>
<div class="a" style="left:35px;top:483px;width:5px;height:1px;background:repeating-linear-gradient(90deg,#a0a0a0 0 1px,transparent 1px 2px)"></div>
<svg style="left:45px;top:475px" width="11" height="14" viewBox="0 0 11 14"><path d="M.5 2.600L5.500 .5l5 2.100v8.800l-5 2.100-5-2.100z" fill="#f7b500" stroke="#d08c00" stroke-width=".9"/><path d="M1 3.100l4.500 1.900v8L1 11.100z" fill="#ffe032"/><path d="M1.300 2.700L5.500 1l4.200 1.700-4.200 1.800z" fill="#fff28a"/><path d="M.5 7l5 2.100 5-2.100M5.500 4.700v8.800" fill="none" stroke="#d08c00" stroke-width=".8"/></svg>
<svg style="left:52px;top:482px" width="8" height="8" viewBox="0 0 8 8"><path d="M4.300 .6l2.900 1.300-.9 1.300.9.600C6.500 6.200 4 7.700 .6 7.400 3 6.600 4.300 5 3.600 3.600L2.700 3z" fill="#4cd137" stroke="#0e6b0e" stroke-width=".9" stroke-linejoin="round"/></svg>
<div class="t " style="left:65px;top:476px;letter-spacing:-0.708px;text-decoration:underline">PODSUMOWANIE</div>
<div class="t r " style="left:9px;width:300px;top:476px;text-decoration:underline">-41744</div>
<div class="t r " style="left:119px;width:300px;top:476px;text-decoration:underline">206990</div>
<div class="t r " style="left:219px;width:300px;top:476px;text-decoration:underline">165246</div>
<svg style="left:66px;top:497px" width="9" height="8" viewBox="0 0 9 8"><path d="M.5 2.500h4V.6L8.500 4l-4 3.400V5.500h-4z" fill="#58c24a" stroke="#167a16" stroke-width="1" stroke-linejoin="round"/><path d="M1.200 3.300h4" stroke="#b6eaa8" stroke-width=".8"/></svg>
<div class="t " style="left:84px;top:494px;letter-spacing:-0.775px;">WĘGIEL BRUNATNY</div>
<div class="t r " style="left:9px;width:300px;top:494px;">0</div>
<div class="t r " style="left:119px;width:300px;top:494px;">15000</div>
<div class="t r " style="left:219px;width:300px;top:494px;">15000</div>
<svg style="left:66px;top:515px" width="9" height="8" viewBox="0 0 9 8"><path d="M.5 2.500h4V.6L8.500 4l-4 3.400V5.500h-4z" fill="#58c24a" stroke="#167a16" stroke-width="1" stroke-linejoin="round"/><path d="M1.200 3.300h4" stroke="#b6eaa8" stroke-width=".8"/></svg>
<div class="t " style="left:84px;top:512px;letter-spacing:-0.759px;">WĘGIEL KAMIENNY</div>
<div class="t r " style="left:9px;width:300px;top:512px;">0</div>
<div class="t r " style="left:119px;width:300px;top:512px;">25000</div>
<div class="t r " style="left:219px;width:300px;top:512px;">25000</div>
<svg style="left:66px;top:533px" width="9" height="8" viewBox="0 0 9 8"><path d="M.5 2.500h4V.6L8.500 4l-4 3.400V5.500h-4z" fill="#58c24a" stroke="#167a16" stroke-width="1" stroke-linejoin="round"/><path d="M1.200 3.300h4" stroke="#b6eaa8" stroke-width=".8"/></svg>
<div class="t " style="left:84px;top:530px;letter-spacing:-0.307px;">001  PIASEK NATURA...</div>
<div class="t r " style="left:9px;width:300px;top:530px;">-29744</div>
<div class="t r " style="left:119px;width:300px;top:530px;">118530</div>
<div class="t r " style="left:219px;width:300px;top:530px;">88786</div>
<svg style="left:66px;top:551px" width="9" height="8" viewBox="0 0 9 8"><path d="M.5 2.500h4V.6L8.500 4l-4 3.400V5.500h-4z" fill="#58c24a" stroke="#167a16" stroke-width="1" stroke-linejoin="round"/><path d="M1.200 3.300h4" stroke="#b6eaa8" stroke-width=".8"/></svg>
<div class="t " style="left:84px;top:548px;letter-spacing:-0.418px;">002  KRUSZYWO DR...</div>
<div class="t r " style="left:9px;width:300px;top:548px;">-4500</div>
<div class="t r " style="left:119px;width:300px;top:548px;">13000</div>
<div class="t r " style="left:219px;width:300px;top:548px;">8500</div>
<svg style="left:66px;top:569px" width="9" height="8" viewBox="0 0 9 8"><path d="M.5 2.500h4V.6L8.500 4l-4 3.400V5.500h-4z" fill="#58c24a" stroke="#167a16" stroke-width="1" stroke-linejoin="round"/><path d="M1.200 3.300h4" stroke="#b6eaa8" stroke-width=".8"/></svg>
<div class="t " style="left:84px;top:566px;letter-spacing:-0.424px;">0216  KRUSZYWO GR...</div>
<div class="t r " style="left:9px;width:300px;top:566px;">0</div>
<div class="t r " style="left:119px;width:300px;top:566px;"></div>
<div class="t r " style="left:219px;width:300px;top:566px;">8820</div>
<svg style="left:66px;top:587px" width="9" height="8" viewBox="0 0 9 8"><path d="M.5 2.500h4V.6L8.500 4l-4 3.400V5.500h-4z" fill="#58c24a" stroke="#167a16" stroke-width="1" stroke-linejoin="round"/><path d="M1.200 3.300h4" stroke="#b6eaa8" stroke-width=".8"/></svg>
<div class="t " style="left:84px;top:584px;letter-spacing:-0.450px;">028  KRUSZYWO GR...</div>
<div class="t r " style="left:9px;width:300px;top:584px;">-5050</div>
<div class="t r " style="left:119px;width:300px;top:584px;">14120</div>
<div class="t r " style="left:219px;width:300px;top:584px;">9070</div>
<svg style="left:66px;top:605px" width="9" height="8" viewBox="0 0 9 8"><path d="M.5 2.500h4V.6L8.500 4l-4 3.400V5.500h-4z" fill="#58c24a" stroke="#167a16" stroke-width="1" stroke-linejoin="round"/><path d="M1.200 3.300h4" stroke="#b6eaa8" stroke-width=".8"/></svg>
<div class="t " style="left:84px;top:602px;letter-spacing:-0.424px;">0816  KRUSZYWO GR...</div>
<div class="t r " style="left:9px;width:300px;top:602px;">-2450</div>
<div class="t r " style="left:119px;width:300px;top:602px;">12500</div>
<div class="t r " style="left:219px;width:300px;top:602px;">10050</div>
<div class="t " style="left:7px;top:685px;letter-spacing:-0.059px;">Data przeliczenia stanów magazynowych: 2015-10-28 07:46:00</div>
<div class="a" style="left:559px;top:69px;width:1px;height:63px;background:#a0a0a0"></div>
<div class="a" style="left:559px;top:131px;width:1121px;height:1px;background:#a0a0a0"></div>
<div class="a" style="left:559px;top:132px;width:1121px;height:1px;background:#fff"></div>
<div class="t " style="left:567px;top:79px;">Data od</div>
<div class="t " style="left:567px;top:106px;">Data do</div>
<div class="inp" style="left:621px;top:75px;width:139px;height:21px;"></div>
<div class="t " style="left:629px;top:79px;letter-spacing:-0.235px;">1 października 2015</div>
<svg style="left:733px;top:79px" width="21" height="12" viewBox="0 0 21 12"><rect x=".5" y=".5" width="10.500" height="11" rx="1.500" fill="#e4e7ec" stroke="#7a8290"/><rect x="2.400" y="2.900" width="6.600" height="6.600" fill="#a2a9b6"/><path d="M2.400 5.100h6.600M2.400 7.300h6.600M4.600 2.900v6.600M6.800 2.900v6.600" stroke="#f2f4f7" stroke-width=".6"/><path d="M13 4.300h7.400L16.700 8.300z" fill="#4a6ea5"/></svg>
<div class="inp" style="left:772px;top:75px;width:79px;height:21px;"></div>
<div class="t " style="left:774px;top:79px;letter-spacing:0.084px;">00:00:00</div>
<div class="a" style="left:833px;top:78px;width:15px;height:7px;border:1px solid #c2c2c2;background:linear-gradient(#f6f6f6,#e2e2e2)"></div>
<div class="a" style="left:833px;top:86px;width:15px;height:7px;border:1px solid #c2c2c2;background:linear-gradient(#f6f6f6,#e2e2e2)"></div>
<svg style="left:837.5px;top:80.0px" width="6" height="3" viewBox="0 0 6 3"><path d="M0 3h6L3 0z" fill="#000"/></svg>
<svg style="left:837.5px;top:88.0px" width="6" height="3" viewBox="0 0 6 3"><path d="M0 0h6L3 3z" fill="#000"/></svg>
<div class="inp" style="left:621px;top:102px;width:139px;height:21px;"></div>
<div class="t " style="left:623px;top:106px;letter-spacing:-0.194px;">31 października 2015</div>
<svg style="left:733px;top:106px" width="21" height="12" viewBox="0 0 21 12"><rect x=".5" y=".5" width="10.500" height="11" rx="1.500" fill="#e4e7ec" stroke="#7a8290"/><rect x="2.400" y="2.900" width="6.600" height="6.600" fill="#a2a9b6"/><path d="M2.400 5.100h6.600M2.400 7.300h6.600M4.600 2.900v6.600M6.800 2.900v6.600" stroke="#f2f4f7" stroke-width=".6"/><path d="M13 4.300h7.400L16.700 8.300z" fill="#4a6ea5"/></svg>
<div class="inp" style="left:772px;top:102px;width:79px;height:21px;"></div>
<div class="t " style="left:774px;top:106px;letter-spacing:0.084px;">23:59:59</div>
<div class="a" style="left:833px;top:105px;width:15px;height:7px;border:1px solid #c2c2c2;background:linear-gradient(#f6f6f6,#e2e2e2)"></div>
<div class="a" style="left:833px;top:113px;width:15px;height:7px;border:1px solid #c2c2c2;background:linear-gradient(#f6f6f6,#e2e2e2)"></div>
<svg style="left:837.5px;top:107.0px" width="6" height="3" viewBox="0 0 6 3"><path d="M0 3h6L3 0z" fill="#000"/></svg>
<svg style="left:837.5px;top:115.0px" width="6" height="3" viewBox="0 0 6 3"><path d="M0 0h6L3 3z" fill="#000"/></svg>
<div class="btn" style="left:862px;top:74px;width:68px;height:23px;"></div>
<div class="btn" style="left:938px;top:74px;width:68px;height:23px;"></div>
<div class="btn" style="left:862px;top:103px;width:144px;height:23px;"></div>
<svg style="left:870px;top:78px" width="16" height="16" viewBox="0 0 16 16"><rect x=".5" y=".5" width="10" height="10" rx="1" fill="#f58a1f" stroke="#c85a00"/><rect x="1.300" y="1.300" width="3.600" height="3.600" fill="#ffc078"/><path d="M.5 5.500h10M5.500 .5v10" stroke="#c85a00" stroke-width=".8"/><rect x="9.500" y="7" width="5.500" height="5.500" fill="#f7962e" stroke="#c85a00"/><path d="M2 12.200h5v-1.900l3.800 2.900L7 16v-1.900H2z" fill="#3fbf3f" stroke="#1a7a1a" stroke-width=".6"/></svg>
<div class="t " style="left:889px;top:79px;">Export</div>
<svg style="left:946px;top:77px" width="17" height="16" viewBox="0 0 17 16"><rect x="1" y="3" width="9.500" height="12" fill="#eaf0fb" stroke="#5f78b0"/><rect x="2.600" y="7.500" width="6.300" height="6" fill="#b8cdee"/><path d="M2.600 9.500h6.300M2.600 11.500h6.300" stroke="#eef3fb" stroke-width=".7"/><path d="M3.200 5.200c1.500-2 4-3.600 6-4l4 .6v4.200l-3.200.6c-1.500 1.200-2.600 1.600-3.600 1.200z" fill="#e0a06a" stroke="#8a5424" stroke-width=".7"/><path d="M5 4.200l3 2M6.300 3.200l3 2" stroke="#8a5424" stroke-width=".5"/><rect x="13" y="0" width="3.800" height="8" fill="#262626"/><rect x="12.400" y="1" width="1" height="6" fill="#9a9a9a"/></svg>
<div class="t " style="left:966px;top:79px;">Drukuj</div>
<svg style="left:888px;top:106px" width="17" height="17" viewBox="0 0 17 17"><circle cx="11" cy="6" r="4.5" fill="#dff0fb" stroke="#6f9fc8" stroke-width="1.4"/><path d="M7.5 9.5l-6 6" stroke="#d07820" stroke-width="2.6" stroke-linecap="round"/></svg>
<div class="t " style="left:907px;top:108px;">Szukaj (Ctrl+F)</div>
<div class="a" style="left:559px;top:134px;width:1121px;height:20px;background:#808080"></div>
<div class="t b w" style="left:565px;top:137px;letter-spacing:0.273px;">Lista operacji dla elementu: "001  PIASEK NATURALNY DROGOWY" w magazynie: "Magazyn Główny"</div>
<div class="a" style="left:559px;top:154px;width:1121px;height:533px;background:#fff"></div>
<div class="a" style="left:559px;top:170px;width:1121px;height:1px;background:#e3ebf5"></div>
<div class="a" style="left:738px;top:154px;width:1px;height:16px;background:#e3ebf5"></div>
<div class="a" style="left:878px;top:154px;width:1px;height:16px;background:#e3ebf5"></div>
<div class="a" style="left:953px;top:154px;width:1px;height:16px;background:#e3ebf5"></div>
<div class="a" style="left:1013px;top:154px;width:1px;height:16px;background:#e3ebf5"></div>
<div class="a" style="left:1123px;top:154px;width:1px;height:16px;background:#e3ebf5"></div>
<div class="a" style="left:1233px;top:154px;width:1px;height:16px;background:#e3ebf5"></div>
<div class="a" style="left:1333px;top:154px;width:1px;height:16px;background:#e3ebf5"></div>
<div class="a" style="left:1483px;top:154px;width:1px;height:16px;background:#e3ebf5"></div>
<div class="a" style="left:1573px;top:154px;width:1px;height:16px;background:#e3ebf5"></div>
<div class="t " style="left:565px;top:156px;">Data operacji</div>
<div class="t r " style="left:573px;width:300px;top:156px;">Typ operacji</div>
<div class="t r " style="left:647px;width:300px;top:156px;">Nr ważenia</div>
<div class="t r " style="left:708px;width:300px;top:156px;">Netto</div>
<div class="t r " style="left:818px;width:300px;top:156px;">Stan (wydania)</div>
<div class="t r " style="left:928px;width:300px;top:156px;">Stan (przyjęcia)</div>
<div class="t r " style="left:1028px;width:300px;top:156px;">Stan ogółem</div>
<div class="t r " style="left:1178px;width:300px;top:156px;">Użytkownik</div>
<div class="t " style="left:1489px;top:156px;">Nr rej.</div>
<div class="t " style="left:1580px;top:156px;letter-spacing:-0.157px;">Stanowisko wagowe</div>
<div class="a" style="left:559px;top:188px;width:1121px;height:1px;background:repeating-linear-gradient(90deg,#efefef 0 1px,transparent 1px 2px)"></div>
<div class="a" style="left:559px;top:206px;width:1121px;height:1px;background:repeating-linear-gradient(90deg,#efefef 0 1px,transparent 1px 2px)"></div>
<div class="a" style="left:559px;top:224px;width:1121px;height:1px;background:repeating-linear-gradient(90deg,#efefef 0 1px,transparent 1px 2px)"></div>
<div class="a" style="left:559px;top:242px;width:1121px;height:1px;background:repeating-linear-gradient(90deg,#efefef 0 1px,transparent 1px 2px)"></div>
<div class="a" style="left:559px;top:260px;width:1121px;height:1px;background:repeating-linear-gradient(90deg,#efefef 0 1px,transparent 1px 2px)"></div>
<div class="a" style="left:559px;top:278px;width:1121px;height:1px;background:repeating-linear-gradient(90deg,#efefef 0 1px,transparent 1px 2px)"></div>
<div class="a" style="left:559px;top:296px;width:1121px;height:1px;background:repeating-linear-gradient(90deg,#efefef 0 1px,transparent 1px 2px)"></div>
<div class="a" style="left:559px;top:314px;width:1121px;height:1px;background:repeating-linear-gradient(90deg,#efefef 0 1px,transparent 1px 2px)"></div>
<div class="a" style="left:559px;top:332px;width:1121px;height:1px;background:repeating-linear-gradient(90deg,#efefef 0 1px,transparent 1px 2px)"></div>
<div class="a" style="left:559px;top:350px;width:1121px;height:1px;background:repeating-linear-gradient(90deg,#efefef 0 1px,transparent 1px 2px)"></div>
<div class="a" style="left:559px;top:368px;width:1121px;height:1px;background:repeating-linear-gradient(90deg,#efefef 0 1px,transparent 1px 2px)"></div>
<div class="a" style="left:559px;top:386px;width:1121px;height:1px;background:repeating-linear-gradient(90deg,#efefef 0 1px,transparent 1px 2px)"></div>
<div class="a" style="left:559px;top:404px;width:1121px;height:1px;background:repeating-linear-gradient(90deg,#efefef 0 1px,transparent 1px 2px)"></div>
<div class="a" style="left:559px;top:422px;width:1121px;height:1px;background:repeating-linear-gradient(90deg,#efefef 0 1px,transparent 1px 2px)"></div>
<div class="a" style="left:559px;top:440px;width:1121px;height:1px;background:repeating-linear-gradient(90deg,#efefef 0 1px,transparent 1px 2px)"></div>
<div class="a" style="left:559px;top:458px;width:1121px;height:1px;background:repeating-linear-gradient(90deg,#efefef 0 1px,transparent 1px 2px)"></div>
<div class="a" style="left:559px;top:476px;width:1121px;height:1px;background:repeating-linear-gradient(90deg,#efefef 0 1px,transparent 1px 2px)"></div>
<div class="a" style="left:559px;top:494px;width:1121px;height:1px;background:repeating-linear-gradient(90deg,#efefef 0 1px,transparent 1px 2px)"></div>
<div class="a" style="left:559px;top:512px;width:1121px;height:1px;background:repeating-linear-gradient(90deg,#efefef 0 1px,transparent 1px 2px)"></div>
<div class="a" style="left:559px;top:530px;width:1121px;height:1px;background:repeating-linear-gradient(90deg,#efefef 0 1px,transparent 1px 2px)"></div>
<div class="a" style="left:738px;top:171px;width:1px;height:360px;background:repeating-linear-gradient(180deg,#efefef 0 1px,transparent 1px 2px)"></div>
<div class="a" style="left:878px;top:171px;width:1px;height:360px;background:repeating-linear-gradient(180deg,#efefef 0 1px,transparent 1px 2px)"></div>
<div class="a" style="left:953px;top:171px;width:1px;height:360px;background:repeating-linear-gradient(180deg,#efefef 0 1px,transparent 1px 2px)"></div>
<div class="a" style="left:1013px;top:171px;width:1px;height:360px;background:repeating-linear-gradient(180deg,#efefef 0 1px,transparent 1px 2px)"></div>
<div class="a" style="left:1123px;top:171px;width:1px;height:360px;background:repeating-linear-gradient(180deg,#efefef 0 1px,transparent 1px 2px)"></div>
<div class="a" style="left:1233px;top:171px;width:1px;height:360px;background:repeating-linear-gradient(180deg,#efefef 0 1px,transparent 1px 2px)"></div>
<div class="a" style="left:1333px;top:171px;width:1px;height:360px;background:repeating-linear-gradient(180deg,#efefef 0 1px,transparent 1px 2px)"></div>
<div class="a" style="left:1483px;top:171px;width:1px;height:360px;background:repeating-linear-gradient(180deg,#efefef 0 1px,transparent 1px 2px)"></div>
<div class="a" style="left:1573px;top:171px;width:1px;height:360px;background:repeating-linear-gradient(180deg,#efefef 0 1px,transparent 1px 2px)"></div>
<svg style="left:584px;top:175px" width="9" height="9" viewBox="0 0 9 9"><path d="M3.500 .5h2v3h3v2h-3v3h-2v-3h-3v-2h3z" fill="#7ae04f" stroke="#0f8a0f" stroke-width="1"/></svg>
<div class="t " style="left:603px;top:173px;">2015-10-28 07:45:37</div>
<div class="t r " style="left:573px;width:300px;top:173px;letter-spacing:-0.082px;">Przyjęcie zewnętrzne</div>
<div class="t r " style="left:648px;width:300px;top:173px;">20/2015</div>
<div class="t r " style="left:709px;width:300px;top:173px;">4637</div>
<div class="t r " style="left:818px;width:300px;top:173px;">-25807</div>
<div class="t r " style="left:928px;width:300px;top:173px;">106530</div>
<div class="t r " style="left:1028px;width:300px;top:173px;">80723</div>
<div class="t r " style="left:1178px;width:300px;top:173px;letter-spacing:-0.190px;">GSW Administrator</div>
<div class="t " style="left:1491px;top:173px;">RE 231</div>
<div class="t " style="left:1582px;top:173px;">Waga 1</div>
<svg style="left:584px;top:193px" width="9" height="9" viewBox="0 0 9 9"><path d="M3.500 .5h2v3h3v2h-3v3h-2v-3h-3v-2h3z" fill="#7ae04f" stroke="#0f8a0f" stroke-width="1"/></svg>
<div class="t " style="left:603px;top:191px;">2015-10-28 07:45:05</div>
<div class="t r " style="left:573px;width:300px;top:191px;letter-spacing:-0.082px;">Przyjęcie zewnętrzne</div>
<div class="t r " style="left:648px;width:300px;top:191px;">18/2015</div>
<div class="t r " style="left:709px;width:300px;top:191px;">3300</div>
<div class="t r " style="left:818px;width:300px;top:191px;">-25807</div>
<div class="t r " style="left:928px;width:300px;top:191px;">101893</div>
<div class="t r " style="left:1028px;width:300px;top:191px;">76086</div>
<div class="t r " style="left:1178px;width:300px;top:191px;letter-spacing:-0.190px;">GSW Administrator</div>
<div class="t " style="left:1491px;top:191px;">KR 667</div>
<div class="t " style="left:1582px;top:191px;">Waga 1</div>
<svg style="left:584px;top:211px" width="9" height="9" viewBox="0 0 9 9"><path d="M3.500 .5h2v3h3v2h-3v3h-2v-3h-3v-2h3z" fill="#7ae04f" stroke="#0f8a0f" stroke-width="1"/></svg>
<div class="t " style="left:603px;top:209px;">2015-10-28 07:44:57</div>
<div class="t r " style="left:573px;width:300px;top:209px;letter-spacing:-0.082px;">Przyjęcie zewnętrzne</div>
<div class="t r " style="left:648px;width:300px;top:209px;">19/2015</div>
<div class="t r " style="left:709px;width:300px;top:209px;">4000</div>
<div class="t r " style="left:818px;width:300px;top:209px;">-25807</div>
<div class="t r " style="left:928px;width:300px;top:209px;">98593</div>
<div class="t r " style="left:1028px;width:300px;top:209px;">72786</div>
<div class="t r " style="left:1178px;width:300px;top:209px;letter-spacing:-0.190px;">GSW Administrator</div>
<div class="t " style="left:1491px;top:209px;">TY 765</div>
<div class="t " style="left:1582px;top:209px;">Waga 1</div>
<svg style="left:584px;top:232px" width="10" height="4" viewBox="0 0 10 4"><rect x=".5" y=".5" width="9" height="3" fill="#f83c1c" stroke="#8b0a0a" stroke-width="1"/></svg>
<div class="t " style="left:603px;top:227px;">2015-10-28 07:42:21</div>
<div class="t r " style="left:573px;width:300px;top:227px;letter-spacing:-0.087px;">Rozchód wewnętrzny</div>
<div class="t r " style="left:648px;width:300px;top:227px;"></div>
<div class="t r " style="left:709px;width:300px;top:227px;">-1000</div>
<div class="t r " style="left:818px;width:300px;top:227px;">-25807</div>
<div class="t r " style="left:928px;width:300px;top:227px;">94593</div>
<div class="t r " style="left:1028px;width:300px;top:227px;">68786</div>
<div class="t r " style="left:1178px;width:300px;top:227px;letter-spacing:-0.190px;">GSW Administrator</div>
<div class="t " style="left:1491px;top:227px;"></div>
<div class="t " style="left:1582px;top:227px;"></div>
<div class="a" style="left:585px;top:252px;width:7px;height:5px;background:#5a4ad0"></div>
<svg style="left:584px;top:247px" width="9" height="9" viewBox="0 0 9 9"><path d="M3.500 .5h2v3h3v2h-3v3h-2v-3h-3v-2h3z" fill="#7ae04f" stroke="#0f8a0f" stroke-width="1"/></svg>
<div class="t " style="left:603px;top:245px;">2015-10-28 07:42:21</div>
<div class="t r " style="left:573px;width:300px;top:245px;letter-spacing:-0.198px;">Przesunięcie międzymag...</div>
<div class="t r " style="left:648px;width:300px;top:245px;"></div>
<div class="t r " style="left:709px;width:300px;top:245px;">-1000</div>
<div class="t r " style="left:818px;width:300px;top:245px;">-24807</div>
<div class="t r " style="left:928px;width:300px;top:245px;">94593</div>
<div class="t r " style="left:1028px;width:300px;top:245px;">69786</div>
<div class="t r " style="left:1178px;width:300px;top:245px;letter-spacing:-0.190px;">GSW Administrator</div>
<div class="t " style="left:1491px;top:245px;"></div>
<div class="t " style="left:1582px;top:245px;"></div>
<svg style="left:584px;top:265px" width="9" height="9" viewBox="0 0 9 9"><path d="M3.500 .5h2v3h3v2h-3v3h-2v-3h-3v-2h3z" fill="#7ae04f" stroke="#0f8a0f" stroke-width="1"/></svg>
<div class="t " style="left:603px;top:263px;">2015-10-27 15:45:11</div>
<div class="t r " style="left:573px;width:300px;top:263px;letter-spacing:-0.082px;">Przyjęcie zewnętrzne</div>
<div class="t r " style="left:648px;width:300px;top:263px;"></div>
<div class="t r " style="left:709px;width:300px;top:263px;">1000</div>
<div class="t r " style="left:818px;width:300px;top:263px;">-20807</div>
<div class="t r " style="left:928px;width:300px;top:263px;">95593</div>
<div class="t r " style="left:1028px;width:300px;top:263px;">65786</div>
<div class="t r " style="left:1178px;width:300px;top:263px;letter-spacing:-0.190px;">GSW Administrator</div>
<div class="t " style="left:1491px;top:263px;"></div>
<div class="t " style="left:1582px;top:263px;"></div>
<svg style="left:584px;top:286px" width="10" height="4" viewBox="0 0 10 4"><rect x=".5" y=".5" width="9" height="3" fill="#f83c1c" stroke="#8b0a0a" stroke-width="1"/></svg>
<div class="t " style="left:603px;top:281px;">2015-10-27 15:44:11</div>
<div class="t r " style="left:573px;width:300px;top:281px;letter-spacing:-0.087px;">Rozchód wewnętrzny</div>
<div class="t r " style="left:648px;width:300px;top:281px;"></div>
<div class="t r " style="left:709px;width:300px;top:281px;">1000</div>
<div class="t r " style="left:818px;width:300px;top:281px;">-21807</div>
<div class="t r " style="left:928px;width:300px;top:281px;">96593</div>
<div class="t r " style="left:1028px;width:300px;top:281px;">60786</div>
<div class="t r " style="left:1178px;width:300px;top:281px;letter-spacing:-0.190px;">GSW Administrator</div>
<div class="t " style="left:1491px;top:281px;"></div>
<div class="t " style="left:1582px;top:281px;"></div>
<svg style="left:584px;top:301px" width="9" height="9" viewBox="0 0 9 9"><path d="M3.500 .5h2v3h3v2h-3v3h-2v-3h-3v-2h3z" fill="#7ae04f" stroke="#0f8a0f" stroke-width="1"/></svg>
<div class="t " style="left:603px;top:299px;">2015-10-27 15:43:11</div>
<div class="t r " style="left:573px;width:300px;top:299px;letter-spacing:-0.082px;">Przyjęcie zewnętrzne</div>
<div class="t r " style="left:648px;width:300px;top:299px;"></div>
<div class="t r " style="left:709px;width:300px;top:299px;">1000</div>
<div class="t r " style="left:818px;width:300px;top:299px;">-22807</div>
<div class="t r " style="left:928px;width:300px;top:299px;">90593</div>
<div class="t r " style="left:1028px;width:300px;top:299px;">61786</div>
<div class="t r " style="left:1178px;width:300px;top:299px;letter-spacing:-0.190px;">GSW Administrator</div>
<div class="t " style="left:1491px;top:299px;"></div>
<div class="t " style="left:1582px;top:299px;"></div>
<svg style="left:584px;top:319px" width="9" height="9" viewBox="0 0 9 9"><path d="M3.500 .5h2v3h3v2h-3v3h-2v-3h-3v-2h3z" fill="#7ae04f" stroke="#0f8a0f" stroke-width="1"/></svg>
<div class="t " style="left:603px;top:317px;">2015-10-27 15:42:11</div>
<div class="t r " style="left:573px;width:300px;top:317px;letter-spacing:-0.082px;">Przyjęcie zewnętrzne</div>
<div class="t r " style="left:648px;width:300px;top:317px;"></div>
<div class="t r " style="left:709px;width:300px;top:317px;">1000</div>
<div class="t r " style="left:818px;width:300px;top:317px;">-23807</div>
<div class="t r " style="left:928px;width:300px;top:317px;">91593</div>
<div class="t r " style="left:1028px;width:300px;top:317px;">62786</div>
<div class="t r " style="left:1178px;width:300px;top:317px;letter-spacing:-0.190px;">GSW Administrator</div>
<div class="t " style="left:1491px;top:317px;"></div>
<div class="t " style="left:1582px;top:317px;"></div>
<svg style="left:584px;top:340px" width="10" height="4" viewBox="0 0 10 4"><rect x=".5" y=".5" width="9" height="3" fill="#f83c1c" stroke="#8b0a0a" stroke-width="1"/></svg>
<div class="t " style="left:603px;top:335px;">2015-10-27 15:41:11</div>
<div class="t r " style="left:573px;width:300px;top:335px;letter-spacing:-0.087px;">Rozchód wewnętrzny</div>
<div class="t r " style="left:648px;width:300px;top:335px;"></div>
<div class="t r " style="left:709px;width:300px;top:335px;">1000</div>
<div class="t r " style="left:818px;width:300px;top:335px;">-24807</div>
<div class="t r " style="left:928px;width:300px;top:335px;">92593</div>
<div class="t r " style="left:1028px;width:300px;top:335px;">63786</div>
<div class="t r " style="left:1178px;width:300px;top:335px;letter-spacing:-0.190px;">GSW Administrator</div>
<div class="t " style="left:1491px;top:335px;"></div>
<div class="t " style="left:1582px;top:335px;"></div>
<svg style="left:584px;top:355px" width="9" height="9" viewBox="0 0 9 9"><path d="M3.500 .5h2v3h3v2h-3v3h-2v-3h-3v-2h3z" fill="#7ae04f" stroke="#0f8a0f" stroke-width="1"/></svg>
<div class="t " style="left:603px;top:353px;">2015-10-27 15:40:11</div>
<div class="t r " style="left:573px;width:300px;top:353px;letter-spacing:-0.082px;">Przyjęcie zewnętrzne</div>
<div class="t r " style="left:648px;width:300px;top:353px;"></div>
<div class="t r " style="left:709px;width:300px;top:353px;">1000</div>
<div class="t r " style="left:818px;width:300px;top:353px;">-20807</div>
<div class="t r " style="left:928px;width:300px;top:353px;">93593</div>
<div class="t r " style="left:1028px;width:300px;top:353px;">64786</div>
<div class="t r " style="left:1178px;width:300px;top:353px;letter-spacing:-0.190px;">GSW Administrator</div>
<div class="t " style="left:1491px;top:353px;"></div>
<div class="t " style="left:1582px;top:353px;"></div>
<svg style="left:584px;top:373px" width="9" height="9" viewBox="0 0 9 9"><path d="M3.500 .5h2v3h3v2h-3v3h-2v-3h-3v-2h3z" fill="#7ae04f" stroke="#0f8a0f" stroke-width="1"/></svg>
<div class="t " style="left:603px;top:371px;">2015-10-27 15:39:11</div>
<div class="t r " style="left:573px;width:300px;top:371px;letter-spacing:-0.082px;">Przyjęcie zewnętrzne</div>
<div class="t r " style="left:648px;width:300px;top:371px;"></div>
<div class="t r " style="left:709px;width:300px;top:371px;">1000</div>
<div class="t r " style="left:818px;width:300px;top:371px;">-21807</div>
<div class="t r " style="left:928px;width:300px;top:371px;">94593</div>
<div class="t r " style="left:1028px;width:300px;top:371px;">65786</div>
<div class="t r " style="left:1178px;width:300px;top:371px;letter-spacing:-0.190px;">GSW Administrator</div>
<div class="t " style="left:1491px;top:371px;"></div>
<div class="t " style="left:1582px;top:371px;"></div>
<svg style="left:584px;top:394px" width="10" height="4" viewBox="0 0 10 4"><rect x=".5" y=".5" width="9" height="3" fill="#f83c1c" stroke="#8b0a0a" stroke-width="1"/></svg>
<div class="t " style="left:603px;top:389px;">2015-10-27 15:38:11</div>
<div class="t r " style="left:573px;width:300px;top:389px;letter-spacing:-0.087px;">Rozchód wewnętrzny</div>
<div class="t r " style="left:648px;width:300px;top:389px;"></div>
<div class="t r " style="left:709px;width:300px;top:389px;">1000</div>
<div class="t r " style="left:818px;width:300px;top:389px;">-22807</div>
<div class="t r " style="left:928px;width:300px;top:389px;">95593</div>
<div class="t r " style="left:1028px;width:300px;top:389px;">60786</div>
<div class="t r " style="left:1178px;width:300px;top:389px;letter-spacing:-0.190px;">GSW Administrator</div>
<div class="t " style="left:1491px;top:389px;"></div>
<div class="t " style="left:1582px;top:389px;"></div>
<svg style="left:584px;top:409px" width="9" height="9" viewBox="0 0 9 9"><path d="M3.500 .5h2v3h3v2h-3v3h-2v-3h-3v-2h3z" fill="#7ae04f" stroke="#0f8a0f" stroke-width="1"/></svg>
<div class="t " style="left:603px;top:407px;">2015-10-27 15:37:11</div>
<div class="t r " style="left:573px;width:300px;top:407px;letter-spacing:-0.082px;">Przyjęcie zewnętrzne</div>
<div class="t r " style="left:648px;width:300px;top:407px;"></div>
<div class="t r " style="left:709px;width:300px;top:407px;">1000</div>
<div class="t r " style="left:818px;width:300px;top:407px;">-23807</div>
<div class="t r " style="left:928px;width:300px;top:407px;">96593</div>
<div class="t r " style="left:1028px;width:300px;top:407px;">61786</div>
<div class="t r " style="left:1178px;width:300px;top:407px;letter-spacing:-0.190px;">GSW Administrator</div>
<div class="t " style="left:1491px;top:407px;"></div>
<div class="t " style="left:1582px;top:407px;"></div>
<svg style="left:584px;top:427px" width="9" height="9" viewBox="0 0 9 9"><path d="M3.500 .5h2v3h3v2h-3v3h-2v-3h-3v-2h3z" fill="#7ae04f" stroke="#0f8a0f" stroke-width="1"/></svg>
<div class="t " style="left:603px;top:425px;">2015-10-27 15:36:11</div>
<div class="t r " style="left:573px;width:300px;top:425px;letter-spacing:-0.082px;">Przyjęcie zewnętrzne</div>
<div class="t r " style="left:648px;width:300px;top:425px;"></div>
<div class="t r " style="left:709px;width:300px;top:425px;">1000</div>
<div class="t r " style="left:818px;width:300px;top:425px;">-24807</div>
<div class="t r " style="left:928px;width:300px;top:425px;">90593</div>
<div class="t r " style="left:1028px;width:300px;top:425px;">62786</div>
<div class="t r " style="left:1178px;width:300px;top:425px;letter-spacing:-0.190px;">GSW Administrator</div>
<div class="t " style="left:1491px;top:425px;"></div>
<div class="t " style="left:1582px;top:425px;"></div>
<svg style="left:584px;top:445px" width="9" height="9" viewBox="0 0 9 9"><path d="M3.500 .5h2v3h3v2h-3v3h-2v-3h-3v-2h3z" fill="#7ae04f" stroke="#0f8a0f" stroke-width="1"/></svg>
<div class="t " style="left:603px;top:443px;">2015-10-27 14:12:08</div>
<div class="t r " style="left:573px;width:300px;top:443px;letter-spacing:-0.082px;">Przyjęcie zewnętrzne</div>
<div class="t r " style="left:648px;width:300px;top:443px;">3/2015</div>
<div class="t r " style="left:709px;width:300px;top:443px;">5200</div>
<div class="t r " style="left:818px;width:300px;top:443px;">-20807</div>
<div class="t r " style="left:928px;width:300px;top:443px;">60593</div>
<div class="t r " style="left:1028px;width:300px;top:443px;">39786</div>
<div class="t r " style="left:1178px;width:300px;top:443px;letter-spacing:-0.190px;">GSW Administrator</div>
<div class="t " style="left:1491px;top:443px;">KT 453</div>
<div class="t " style="left:1582px;top:443px;">Waga 1</div>
<svg style="left:584px;top:463px" width="9" height="9" viewBox="0 0 9 9"><path d="M3.500 .5h2v3h3v2h-3v3h-2v-3h-3v-2h3z" fill="#7ae04f" stroke="#0f8a0f" stroke-width="1"/></svg>
<div class="t " style="left:603px;top:461px;">2015-10-27 15:34:11</div>
<div class="t r " style="left:573px;width:300px;top:461px;letter-spacing:-0.082px;">Przyjęcie zewnętrzne</div>
<div class="t r " style="left:648px;width:300px;top:461px;"></div>
<div class="t r " style="left:709px;width:300px;top:461px;">1000</div>
<div class="t r " style="left:818px;width:300px;top:461px;">-21807</div>
<div class="t r " style="left:928px;width:300px;top:461px;">92593</div>
<div class="t r " style="left:1028px;width:300px;top:461px;">64786</div>
<div class="t r " style="left:1178px;width:300px;top:461px;letter-spacing:-0.190px;">GSW Administrator</div>
<div class="t " style="left:1491px;top:461px;"></div>
<div class="t " style="left:1582px;top:461px;"></div>
<svg style="left:584px;top:481px" width="9" height="9" viewBox="0 0 9 9"><path d="M3.500 .5h2v3h3v2h-3v3h-2v-3h-3v-2h3z" fill="#7ae04f" stroke="#0f8a0f" stroke-width="1"/></svg>
<div class="t " style="left:603px;top:479px;">2015-10-27 15:33:11</div>
<div class="t r " style="left:573px;width:300px;top:479px;letter-spacing:-0.082px;">Przyjęcie zewnętrzne</div>
<div class="t r " style="left:648px;width:300px;top:479px;"></div>
<div class="t r " style="left:709px;width:300px;top:479px;">1000</div>
<div class="t r " style="left:818px;width:300px;top:479px;">-22807</div>
<div class="t r " style="left:928px;width:300px;top:479px;">93593</div>
<div class="t r " style="left:1028px;width:300px;top:479px;">65786</div>
<div class="t r " style="left:1178px;width:300px;top:479px;letter-spacing:-0.190px;">GSW Administrator</div>
<div class="t " style="left:1491px;top:479px;"></div>
<div class="t " style="left:1582px;top:479px;"></div>
<svg style="left:584px;top:502px" width="10" height="4" viewBox="0 0 10 4"><rect x=".5" y=".5" width="9" height="3" fill="#f83c1c" stroke="#8b0a0a" stroke-width="1"/></svg>
<div class="t " style="left:603px;top:497px;">2015-10-27 15:32:11</div>
<div class="t r " style="left:573px;width:300px;top:497px;letter-spacing:-0.087px;">Rozchód wewnętrzny</div>
<div class="t r " style="left:648px;width:300px;top:497px;"></div>
<div class="t r " style="left:709px;width:300px;top:497px;">1000</div>
<div class="t r " style="left:818px;width:300px;top:497px;">-23807</div>
<div class="t r " style="left:928px;width:300px;top:497px;">94593</div>
<div class="t r " style="left:1028px;width:300px;top:497px;">60786</div>
<div class="t r " style="left:1178px;width:300px;top:497px;letter-spacing:-0.190px;">GSW Administrator</div>
<div class="t " style="left:1491px;top:497px;"></div>
<div class="t " style="left:1582px;top:497px;"></div>
<svg style="left:584px;top:517px" width="9" height="9" viewBox="0 0 9 9"><path d="M3.500 .5h2v3h3v2h-3v3h-2v-3h-3v-2h3z" fill="#7ae04f" stroke="#0f8a0f" stroke-width="1"/></svg>
<div class="t " style="left:603px;top:515px;">2015-10-27 15:31:11</div>
<div class="t r " style="left:573px;width:300px;top:515px;letter-spacing:-0.082px;">Przyjęcie zewnętrzne</div>
<div class="t r " style="left:648px;width:300px;top:515px;"></div>
<div class="t r " style="left:709px;width:300px;top:515px;">1000</div>
<div class="t r " style="left:818px;width:300px;top:515px;">-24807</div>
<div class="t r " style="left:928px;width:300px;top:515px;">95593</div>
<div class="t r " style="left:1028px;width:300px;top:515px;">61786</div>
<div class="t r " style="left:1178px;width:300px;top:515px;letter-spacing:-0.190px;">GSW Administrator</div>
<div class="t " style="left:1491px;top:515px;"></div>
<div class="t " style="left:1582px;top:515px;"></div>
<div class="a" style="left:559px;top:687px;width:1121px;height:16px;background:#f0f0f0"></div>
<div class="a" style="left:576px;top:687px;width:866px;height:15px;background:#cdcdcd"></div>
<svg style="left:564px;top:691px" width="6" height="7" viewBox="0 0 6 7"><path d="M5.2 .3L1.4 3.5l3.8 3.2" fill="none" stroke="#505050" stroke-width="2"/></svg>
<svg style="left:1668px;top:691px" width="6" height="7" viewBox="0 0 6 7"><path d="M.8 .3l3.8 3.2L.8 6.700" fill="none" stroke="#505050" stroke-width="2"/></svg>
<div class="dlg" style="left:395px;top:255px;width:540px;height:378px"></div>
<div class="a" style="left:402px;top:285px;width:526px;height:341px;background:#5b9de6"></div>
<div class="t " style="left:514.2px;width:300px;text-align:center;top:263.5px;letter-spacing:-0.270px;font-size:15px;line-height:18px;height:18px;top:262px;color:#1e1e1e">Operacje magazynowe</div>
<div class="a" style="left:897px;top:256px;width:31px;height:20px;background:#c75050"></div>
<svg style="left:908px;top:261px" width="9" height="8" viewBox="0 0 9 8"><path d="M1 .5l7 7M8 .5l-7 7" stroke="#fff" stroke-width="1.7"/></svg>
<div class="a" style="left:403px;top:286px;width:524px;height:339px;background:#f0f0f0"></div>
<div class="a" style="left:403px;top:286px;width:524px;height:52px;background:#fff"></div>
<div class="a" style="left:403px;top:338px;width:524px;height:1px;background:#a0a0a0"></div>
<svg style="left:420px;top:294px" width="31" height="32" viewBox="0 0 31 32"><rect x="1.200" y="17.500" width="9.500" height="4.600" fill="#2a2a2a"/><rect x="3.600" y="18.600" width="4" height="2.800" fill="#9a9a9a"/><path d="M.4 4.800L9.500 1.300l3.100.9v15.100L.4 18z" fill="#2fa82a" stroke="#0e5c0c" stroke-width=".8"/><path d="M9.500 1.300H24v2.300H12.600z" fill="#1f8a1c" stroke="#0e5c0c" stroke-width=".8"/><path d="M2 13l7-8.500 1.500 1L3 15z" fill="#9be886" opacity=".75"/><rect x="24.300" y=".2" width="1.200" height="3.200" fill="#666"/><path d="M12.600 5q0-1.400 1.400-1.400h10.500q1.500 0 1.800 1.400l.5 1.500q3 2.500 3 6.500v8.500q0 .9-.8.900H14L11.300 19l1.300-2z" fill="#e0201a" stroke="#7a0806" stroke-width=".8"/><path d="M13.600 4.300H25v1.600H13.600z" fill="#ff6a55"/><path d="M13.100 8.300h2.200v6.200L13.100 12z" fill="#7fd0ff"/><path d="M16.600 8h11l.6 4.900h-12z" fill="#58b4ff" stroke="#7a0806" stroke-width=".5"/><path d="M17 8.500h7l-4 4h-3.200z" fill="#d4f0ff" opacity=".85"/><path d="M19.300 15.800h8.200l-1 2.200h-6z" fill="#ececec" stroke="#600" stroke-width=".5"/><rect x="15.800" y="19.800" width="4" height="2" fill="#ffd21e"/><rect x="25.600" y="19.800" width="3.200" height="2" fill="#ffd21e"/><path d="M11.500 19l4 4v2.500q-2.500 1-3.700-1.500z" fill="#222"/><rect x="24" y="22.600" width="5" height="1.900" rx=".8" fill="#111"/><path d="M1 25.500l3-1.700h5l3 1.700v3l-3 2.100H4l-3-2.100z" fill="#f4c010" stroke="#b07808" stroke-width=".8"/><path d="M4 24.300h5v2H4z" fill="#ffe45a"/></svg>
<div class="t b" style="left:485px;top:305px;letter-spacing:0.547px;">Operacje magazynowe</div>
<div class="t b" style="left:419px;top:359px;">WYBRANY MAGAZYN</div>
<div class="cmb" style="left:563px;top:356px;width:289px;height:21px;"></div>
<div class="t " style="left:566px;top:360px;letter-spacing:-0.141px;">Magazyn Główny</div>
<div class="a" style="left:833px;top:358px;width:17px;height:17px;border:1px solid #8e8e8e;background:linear-gradient(#fdfdfd,#e6e6e6)"></div>
<svg style="left:837.5px;top:365px" width="8" height="4" viewBox="0 0 8 4"><path d="M0 0h8L4 4z" fill="#000"/></svg>
<div class="t b" style="left:419px;top:387.5px;">PRODUKT</div>
<div class="inp" style="left:563px;top:385px;width:289px;height:19px;border-color:#7a7a7a"></div>
<div class="t b" style="left:565px;top:387px;letter-spacing:-0.186px;color:#0000ee">PIASEK NATURALNY DROGOWY</div>
<div class="btn" style="left:863px;top:386px;width:52px;height:19px;"></div>
<div class="t " style="left:738.7px;width:300px;text-align:center;top:389px;letter-spacing:-0.592px;">Zmień</div>
<div class="a" style="left:411px;top:411px;width:450px;height:28px;border:2px solid #ff0000"></div>
<div class="t b" style="left:419px;top:417px;">TYP OPERACJI</div>
<div class="cmb" style="left:563px;top:414px;width:289px;height:21px;"></div>
<div class="t " style="left:566px;top:418px;letter-spacing:-0.097px;">Przyjęcie zewnętrzne</div>
<div class="a" style="left:833px;top:416px;width:17px;height:17px;border:1px solid #8e8e8e;background:linear-gradient(#fdfdfd,#e6e6e6)"></div>
<svg style="left:837.5px;top:423px" width="8" height="4" viewBox="0 0 8 4"><path d="M0 0h8L4 4z" fill="#000"/></svg>
<div class="t b" style="left:419px;top:446px;">MASA</div>
<div class="inp" style="left:563px;top:443px;width:121px;height:21px;"></div>
<div class="t r " style="left:366.5px;width:300px;top:445px;">3500</div>
<div class="a" style="left:668px;top:446px;width:13px;height:7px;border:1px solid #c2c2c2;background:linear-gradient(#f6f6f6,#e2e2e2)"></div>
<div class="a" style="left:668px;top:454px;width:13px;height:7px;border:1px solid #c2c2c2;background:linear-gradient(#f6f6f6,#e2e2e2)"></div>
<svg style="left:671.5px;top:448.0px" width="6" height="3" viewBox="0 0 6 3"><path d="M0 3h6L3 0z" fill="#000"/></svg>
<svg style="left:671.5px;top:456.0px" width="6" height="3" viewBox="0 0 6 3"><path d="M0 0h6L3 3z" fill="#000"/></svg>
<div class="t b" style="left:692px;top:445px;">kg</div>
<div class="t b" style="left:419px;top:503px;">DATA OPERACJI</div>
<div class="inp" style="left:563px;top:499px;width:161px;height:21px;"></div>
<div class="t " style="left:565px;top:503px;letter-spacing:-0.194px;">28 października 2015</div>
<svg style="left:697px;top:503px" width="21" height="12" viewBox="0 0 21 12"><rect x=".5" y=".5" width="10.500" height="11" rx="1.500" fill="#e4e7ec" stroke="#7a8290"/><rect x="2.400" y="2.900" width="6.600" height="6.600" fill="#a2a9b6"/><path d="M2.400 5.100h6.600M2.400 7.300h6.600M4.600 2.900v6.600M6.800 2.900v6.600" stroke="#f2f4f7" stroke-width=".6"/><path d="M13 4.300h7.400L16.700 8.300z" fill="#4a6ea5"/></svg>
<div class="inp" style="left:758px;top:499px;width:94px;height:21px;"></div>
<div class="t " style="left:760px;top:503px;letter-spacing:0.084px;">07:23:24</div>
<div class="a" style="left:834px;top:502px;width:15px;height:7px;border:1px solid #c2c2c2;background:linear-gradient(#f6f6f6,#e2e2e2)"></div>
<div class="a" style="left:834px;top:510px;width:15px;height:7px;border:1px solid #c2c2c2;background:linear-gradient(#f6f6f6,#e2e2e2)"></div>
<svg style="left:838.5px;top:504.0px" width="6" height="3" viewBox="0 0 6 3"><path d="M0 3h6L3 0z" fill="#000"/></svg>
<svg style="left:838.5px;top:512.0px" width="6" height="3" viewBox="0 0 6 3"><path d="M0 0h6L3 3z" fill="#000"/></svg>
<div class="t b" style="left:419px;top:529px;">NOTATKA</div>
<div class="inp" style="left:563px;top:527px;width:289px;height:19px;border-color:#7a7a7a"></div>
<div class="a" style="left:419px;top:559px;width:13px;height:13px;border:1px solid #707070;background:#fff"></div>
<svg style="left:421px;top:561px" width="9" height="9" viewBox="0 0 9 9"><path d="M1 4.300l2.600 3L8 1.200" fill="none" stroke="#000" stroke-width="2.200"/></svg>
<div class="t " style="left:434.70000000000005px;top:559px;letter-spacing:-0.143px;">Nie zamykaj okna po zatwierdzeniu operacji</div>
<div class="a" style="left:403px;top:578px;width:524px;height:1px;background:#a0a0a0"></div>
<div class="a" style="left:403px;top:579px;width:524px;height:1px;background:#fff"></div>
<div class="btn" style="left:759px;top:591px;width:73px;height:23px;"></div>
<div class="t " style="left:645.5px;width:300px;text-align:center;top:596px;">Ok</div>
<div class="btn" style="left:840px;top:591px;width:73px;height:23px;"></div>
<div class="t " style="left:726.5px;width:300px;text-align:center;top:596px;">Anuluj</div>
<div class="dlg" style="left:963px;top:255px;width:540px;height:378px"></div>
<div class="a" style="left:970px;top:285px;width:526px;height:341px;background:#5b9de6"></div>
<div class="t " style="left:1082.2px;width:300px;text-align:center;top:263.5px;letter-spacing:-0.270px;font-size:15px;line-height:18px;height:18px;top:262px;color:#1e1e1e">Operacje magazynowe</div>
<div class="a" style="left:1465px;top:256px;width:31px;height:20px;background:#c75050"></div>
<svg style="left:1476px;top:261px" width="9" height="8" viewBox="0 0 9 8"><path d="M1 .5l7 7M8 .5l-7 7" stroke="#fff" stroke-width="1.7"/></svg>
<div class="a" style="left:971px;top:286px;width:524px;height:339px;background:#f0f0f0"></div>
<div class="a" style="left:971px;top:286px;width:524px;height:52px;background:#fff"></div>
<div class="a" style="left:971px;top:338px;width:524px;height:1px;background:#a0a0a0"></div>
<svg style="left:988px;top:294px" width="31" height="32" viewBox="0 0 31 32"><rect x="1.200" y="17.500" width="9.500" height="4.600" fill="#2a2a2a"/><rect x="3.600" y="18.600" width="4" height="2.800" fill="#9a9a9a"/><path d="M.4 4.800L9.500 1.300l3.100.9v15.100L.4 18z" fill="#2fa82a" stroke="#0e5c0c" stroke-width=".8"/><path d="M9.500 1.300H24v2.300H12.600z" fill="#1f8a1c" stroke="#0e5c0c" stroke-width=".8"/><path d="M2 13l7-8.500 1.500 1L3 15z" fill="#9be886" opacity=".75"/><rect x="24.300" y=".2" width="1.200" height="3.200" fill="#666"/><path d="M12.600 5q0-1.400 1.400-1.400h10.500q1.500 0 1.800 1.400l.5 1.500q3 2.500 3 6.500v8.500q0 .9-.8.900H14L11.300 19l1.300-2z" fill="#e0201a" stroke="#7a0806" stroke-width=".8"/><path d="M13.600 4.300H25v1.600H13.600z" fill="#ff6a55"/><path d="M13.100 8.300h2.200v6.200L13.100 12z" fill="#7fd0ff"/><path d="M16.600 8h11l.6 4.900h-12z" fill="#58b4ff" stroke="#7a0806" stroke-width=".5"/><path d="M17 8.500h7l-4 4h-3.200z" fill="#d4f0ff" opacity=".85"/><path d="M19.300 15.800h8.200l-1 2.200h-6z" fill="#ececec" stroke="#600" stroke-width=".5"/><rect x="15.800" y="19.800" width="4" height="2" fill="#ffd21e"/><rect x="25.600" y="19.800" width="3.200" height="2" fill="#ffd21e"/><path d="M11.500 19l4 4v2.500q-2.500 1-3.700-1.500z" fill="#222"/><rect x="24" y="22.600" width="5" height="1.900" rx=".8" fill="#111"/><path d="M1 25.500l3-1.700h5l3 1.700v3l-3 2.100H4l-3-2.100z" fill="#f4c010" stroke="#b07808" stroke-width=".8"/><path d="M4 24.300h5v2H4z" fill="#ffe45a"/></svg>
<div class="t b" style="left:1053px;top:305px;letter-spacing:0.547px;">Operacje magazynowe</div>
<div class="t b" style="left:987px;top:359px;">WYBRANY MAGAZYN</div>
<div class="cmb" style="left:1131px;top:356px;width:289px;height:21px;"></div>
<div class="t " style="left:1134px;top:360px;letter-spacing:-0.141px;">Magazyn Główny</div>
<div class="a" style="left:1401px;top:358px;width:17px;height:17px;border:1px solid #8e8e8e;background:linear-gradient(#fdfdfd,#e6e6e6)"></div>
<svg style="left:1405.5px;top:365px" width="8" height="4" viewBox="0 0 8 4"><path d="M0 0h8L4 4z" fill="#000"/></svg>
<div class="t b" style="left:987px;top:387.5px;">PRODUKT</div>
<div class="inp" style="left:1131px;top:385px;width:289px;height:19px;border-color:#7a7a7a"></div>
<div class="t b" style="left:1133px;top:387px;letter-spacing:-0.002px;color:#0000ee">KRUSZYWO GRUBE 2-16</div>
<div class="btn" style="left:1431px;top:386px;width:52px;height:19px;"></div>
<div class="t " style="left:1306.7px;width:300px;text-align:center;top:389px;letter-spacing:-0.592px;">Zmień</div>
<div class="a" style="left:979px;top:411px;width:450px;height:28px;border:2px solid #ff0000"></div>
<div class="t b" style="left:987px;top:417px;">TYP OPERACJI</div>
<div class="cmb" style="left:1131px;top:414px;width:289px;height:21px;"></div>
<div class="t " style="left:1134px;top:418px;letter-spacing:-0.265px;">Przesunięcie międzymagazynowe</div>
<div class="a" style="left:1401px;top:416px;width:17px;height:17px;border:1px solid #8e8e8e;background:linear-gradient(#fdfdfd,#e6e6e6)"></div>
<svg style="left:1405.5px;top:423px" width="8" height="4" viewBox="0 0 8 4"><path d="M0 0h8L4 4z" fill="#000"/></svg>
<div class="t b" style="left:987px;top:446px;">MASA</div>
<div class="inp" style="left:1131px;top:443px;width:121px;height:21px;"></div>
<div class="t r " style="left:934.5px;width:300px;top:445px;">4500</div>
<div class="a" style="left:1236px;top:446px;width:13px;height:7px;border:1px solid #c2c2c2;background:linear-gradient(#f6f6f6,#e2e2e2)"></div>
<div class="a" style="left:1236px;top:454px;width:13px;height:7px;border:1px solid #c2c2c2;background:linear-gradient(#f6f6f6,#e2e2e2)"></div>
<svg style="left:1239.5px;top:448.0px" width="6" height="3" viewBox="0 0 6 3"><path d="M0 3h6L3 0z" fill="#000"/></svg>
<svg style="left:1239.5px;top:456.0px" width="6" height="3" viewBox="0 0 6 3"><path d="M0 0h6L3 3z" fill="#000"/></svg>
<div class="t b" style="left:1260px;top:445px;">kg</div>
<div class="t b" style="left:987px;top:475px;">MAGAZYN DOCELOWY</div>
<div class="cmb" style="left:1131px;top:472px;width:289px;height:21px;"></div>
<div class="t " style="left:1134px;top:476px;letter-spacing:-0.220px;">Magazyn Południe</div>
<div class="a" style="left:1401px;top:474px;width:17px;height:17px;border:1px solid #8e8e8e;background:linear-gradient(#fdfdfd,#e6e6e6)"></div>
<svg style="left:1405.5px;top:481px" width="8" height="4" viewBox="0 0 8 4"><path d="M0 0h8L4 4z" fill="#000"/></svg>
<div class="t b" style="left:987px;top:503px;">DATA OPERACJI</div>
<div class="inp" style="left:1131px;top:499px;width:161px;height:21px;"></div>
<div class="t " style="left:1133px;top:503px;letter-spacing:-0.194px;">28 października 2015</div>
<svg style="left:1265px;top:503px" width="21" height="12" viewBox="0 0 21 12"><rect x=".5" y=".5" width="10.500" height="11" rx="1.500" fill="#e4e7ec" stroke="#7a8290"/><rect x="2.400" y="2.900" width="6.600" height="6.600" fill="#a2a9b6"/><path d="M2.400 5.100h6.600M2.400 7.300h6.600M4.600 2.900v6.600M6.800 2.900v6.600" stroke="#f2f4f7" stroke-width=".6"/><path d="M13 4.300h7.400L16.700 8.300z" fill="#4a6ea5"/></svg>
<div class="inp" style="left:1326px;top:499px;width:94px;height:21px;"></div>
<div class="t " style="left:1328px;top:503px;letter-spacing:0.084px;">07:53:45</div>
<div class="a" style="left:1402px;top:502px;width:15px;height:7px;border:1px solid #c2c2c2;background:linear-gradient(#f6f6f6,#e2e2e2)"></div>
<div class="a" style="left:1402px;top:510px;width:15px;height:7px;border:1px solid #c2c2c2;background:linear-gradient(#f6f6f6,#e2e2e2)"></div>
<svg style="left:1406.5px;top:504.0px" width="6" height="3" viewBox="0 0 6 3"><path d="M0 3h6L3 0z" fill="#000"/></svg>
<svg style="left:1406.5px;top:512.0px" width="6" height="3" viewBox="0 0 6 3"><path d="M0 0h6L3 3z" fill="#000"/></svg>
<div class="t b" style="left:987px;top:529px;">NOTATKA</div>
<div class="inp" style="left:1131px;top:527px;width:289px;height:19px;border-color:#7a7a7a"></div>
<div class="a" style="left:987px;top:559px;width:13px;height:13px;border:1px solid #707070;background:#fff"></div>
<svg style="left:989px;top:561px" width="9" height="9" viewBox="0 0 9 9"><path d="M1 4.300l2.600 3L8 1.200" fill="none" stroke="#000" stroke-width="2.200"/></svg>
<div class="t " style="left:1002.7px;top:559px;letter-spacing:-0.143px;">Nie zamykaj okna po zatwierdzeniu operacji</div>
<div class="a" style="left:971px;top:578px;width:524px;height:1px;background:#a0a0a0"></div>
<div class="a" style="left:971px;top:579px;width:524px;height:1px;background:#fff"></div>
<div class="btn" style="left:1327px;top:591px;width:73px;height:23px;"></div>
<div class="t " style="left:1213.5px;width:300px;text-align:center;top:596px;">Ok</div>
<div class="btn" style="left:1408px;top:591px;width:73px;height:23px;"></div>
<div class="t " style="left:1294.5px;width:300px;text-align:center;top:596px;">Anuluj</div>
</body></html>
